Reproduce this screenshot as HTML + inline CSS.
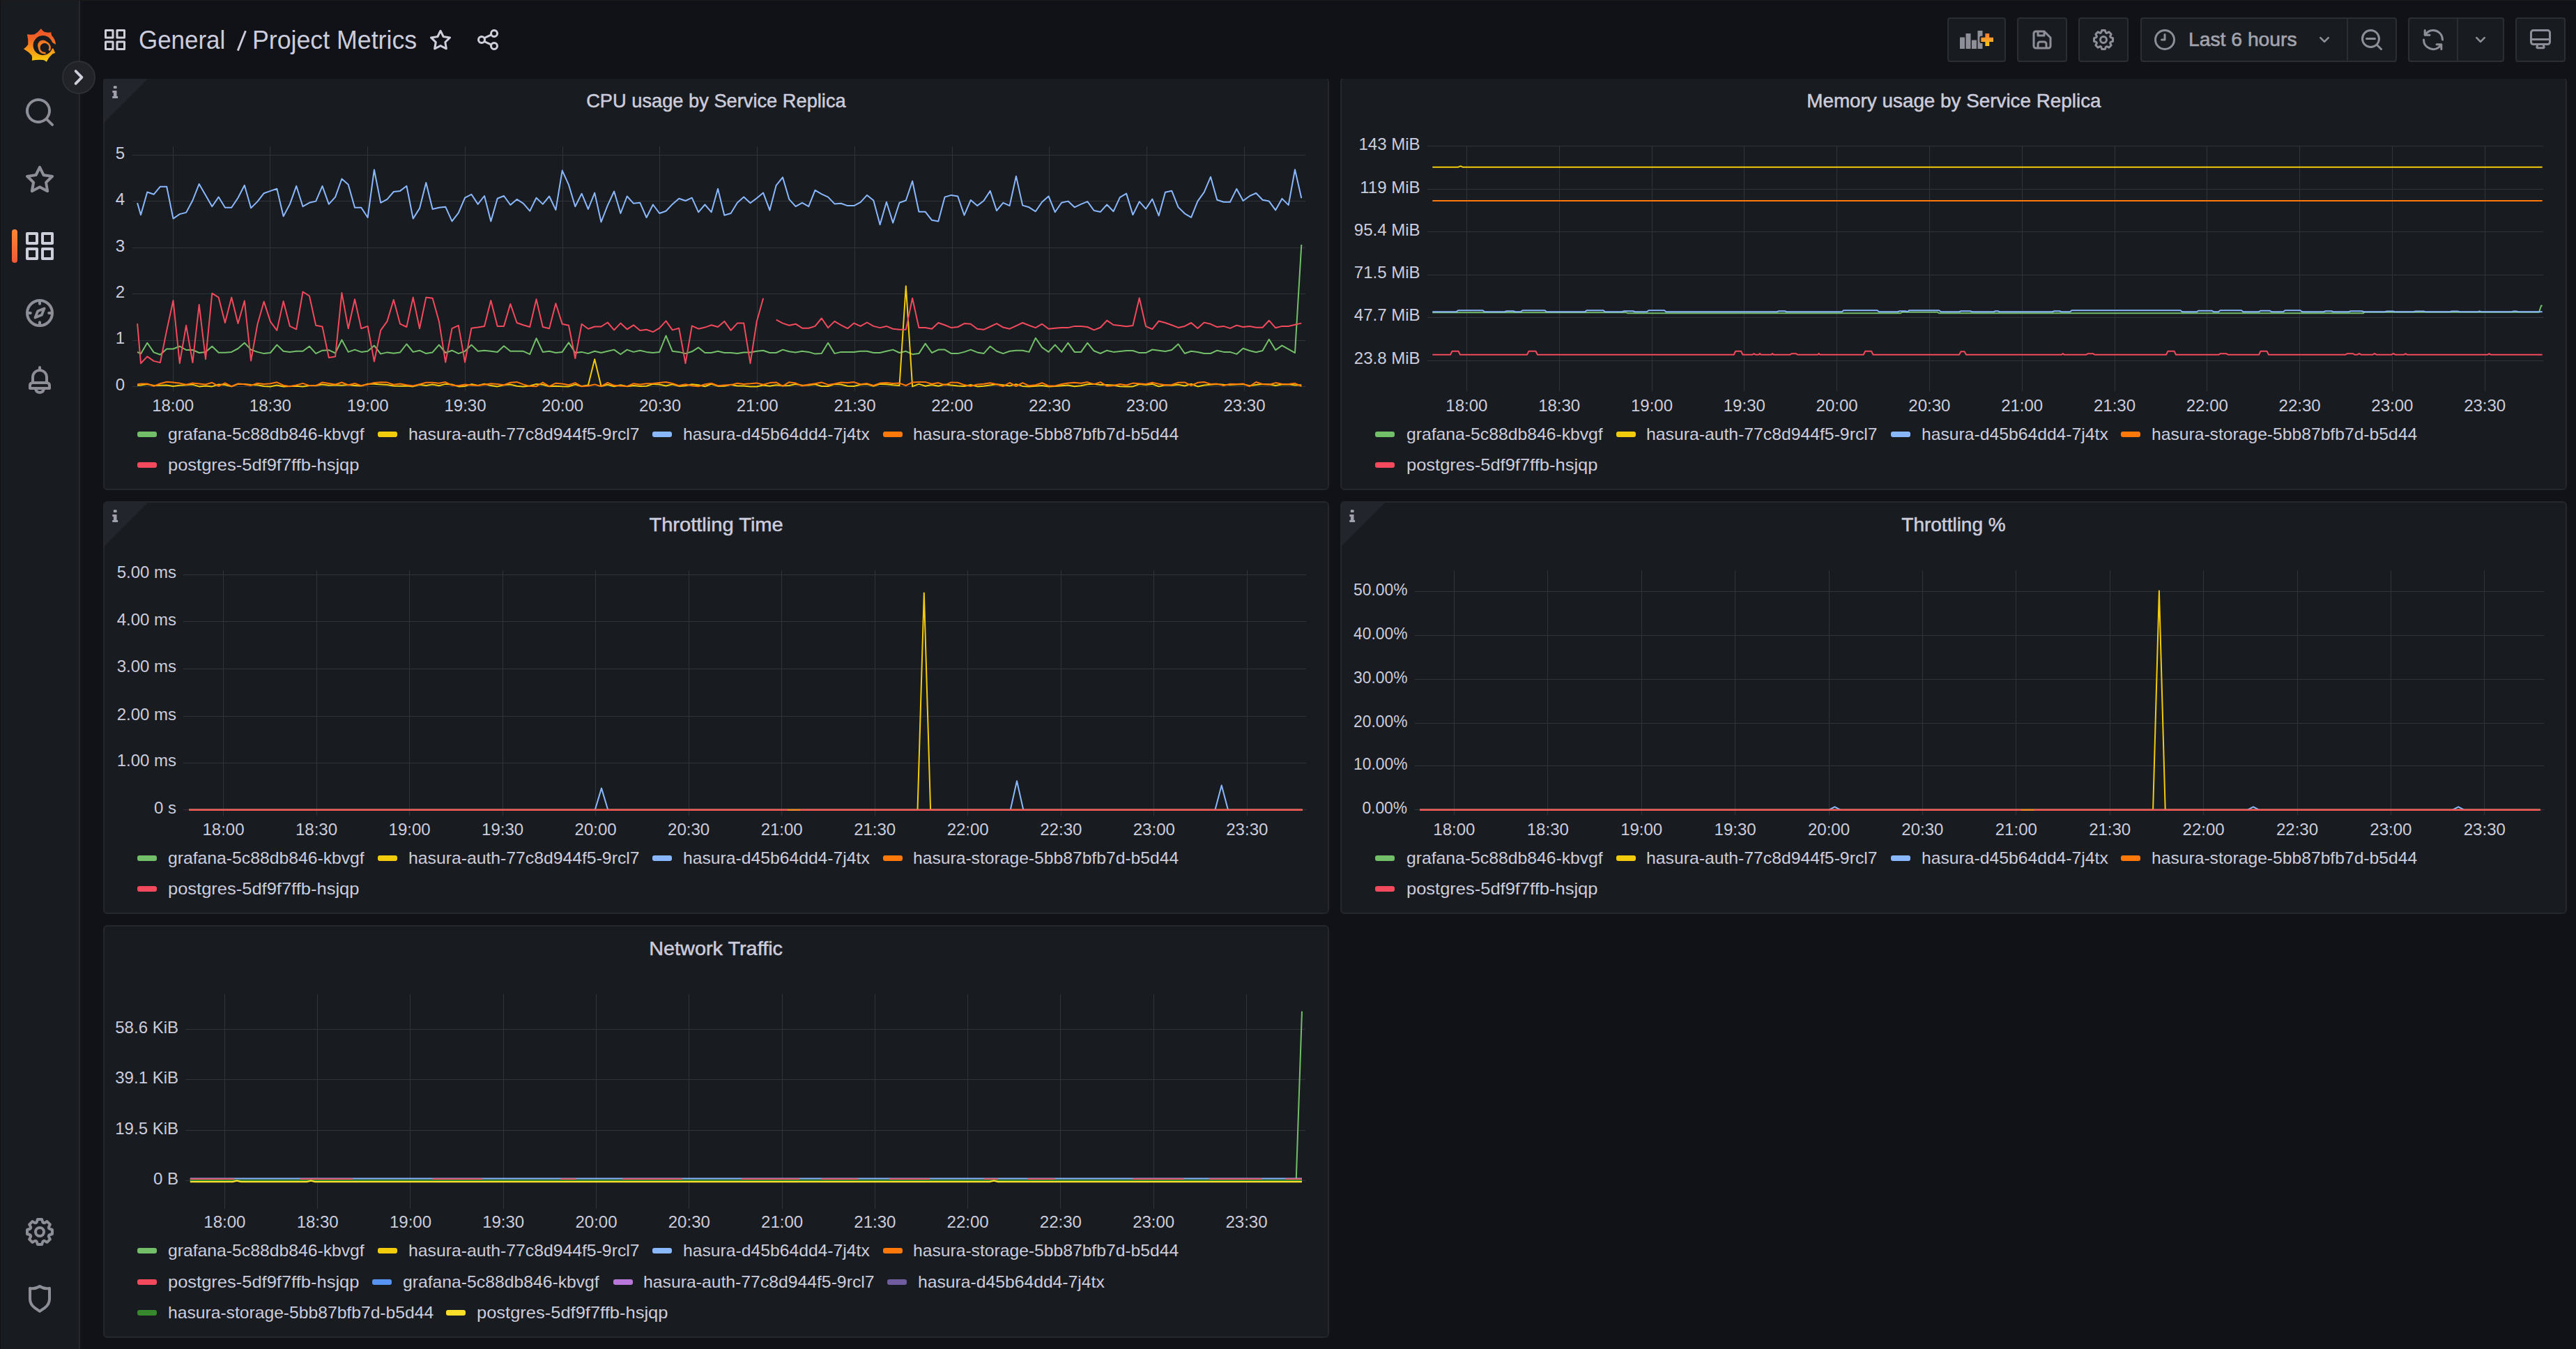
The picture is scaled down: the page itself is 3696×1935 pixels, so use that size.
<!DOCTYPE html><html><head><meta charset="utf-8"><style>html,body{margin:0;padding:0;background:#111217;width:3696px;height:1935px;overflow:hidden;position:relative;font-family:'Liberation Sans', sans-serif}</style></head><body>
<div style="position:absolute;left:147.5px;top:111px;width:1759.5px;height:592px;box-sizing:border-box;background:#181b1f;border:2px solid #24272c;border-radius:6px;overflow:hidden"><div style="position:absolute;left:-2px;top:-2px;width:0;height:0;border-style:solid;border-width:66px 66px 0 0;border-color:#22252b transparent transparent transparent"></div><svg style="position:absolute;left:-2px;top:-2px" width="40" height="40" viewBox="0 0 40 40"><g fill="#a0a1ac"><rect x="14.8" y="12.2" width="4.8" height="3.9" rx="0.8"/><path d="M13.3 19h6.2v8.1h1.6v3h-7.8v-3h1.6v-5h-1.6z"/></g></svg></div>
<div style="position:absolute;left:627.25px;width:800px;top:129.3px;text-align:center;font:28px 'Liberation Sans', sans-serif;color:#ccccdc;line-height:32px;-webkit-text-stroke:0.5px #ccccdc"><span style="display:inline-block;transform:scaleX(0.973)">CPU usage by Service Replica</span></div>
<div style="position:absolute;left:1923px;top:111px;width:1760px;height:592px;box-sizing:border-box;background:#181b1f;border:2px solid #24272c;border-radius:6px;overflow:hidden"></div>
<div style="position:absolute;left:2403.0px;width:800px;top:129.3px;text-align:center;font:28px 'Liberation Sans', sans-serif;color:#ccccdc;line-height:32px;-webkit-text-stroke:0.5px #ccccdc"><span style="display:inline-block;transform:scaleX(0.994)">Memory usage by Service Replica</span></div>
<div style="position:absolute;left:147.5px;top:719px;width:1759.5px;height:592px;box-sizing:border-box;background:#181b1f;border:2px solid #24272c;border-radius:6px;overflow:hidden"><div style="position:absolute;left:-2px;top:-2px;width:0;height:0;border-style:solid;border-width:66px 66px 0 0;border-color:#22252b transparent transparent transparent"></div><svg style="position:absolute;left:-2px;top:-2px" width="40" height="40" viewBox="0 0 40 40"><g fill="#a0a1ac"><rect x="14.8" y="12.2" width="4.8" height="3.9" rx="0.8"/><path d="M13.3 19h6.2v8.1h1.6v3h-7.8v-3h1.6v-5h-1.6z"/></g></svg></div>
<div style="position:absolute;left:627.25px;width:800px;top:737.3px;text-align:center;font:28px 'Liberation Sans', sans-serif;color:#ccccdc;line-height:32px;-webkit-text-stroke:0.5px #ccccdc"><span style="display:inline-block;transform:scaleX(1.039)">Throttling Time</span></div>
<div style="position:absolute;left:1923px;top:719px;width:1760px;height:592px;box-sizing:border-box;background:#181b1f;border:2px solid #24272c;border-radius:6px;overflow:hidden"><div style="position:absolute;left:-2px;top:-2px;width:0;height:0;border-style:solid;border-width:66px 66px 0 0;border-color:#22252b transparent transparent transparent"></div><svg style="position:absolute;left:-2px;top:-2px" width="40" height="40" viewBox="0 0 40 40"><g fill="#a0a1ac"><rect x="14.8" y="12.2" width="4.8" height="3.9" rx="0.8"/><path d="M13.3 19h6.2v8.1h1.6v3h-7.8v-3h1.6v-5h-1.6z"/></g></svg></div>
<div style="position:absolute;left:2403.0px;width:800px;top:737.3px;text-align:center;font:28px 'Liberation Sans', sans-serif;color:#ccccdc;line-height:32px;-webkit-text-stroke:0.5px #ccccdc"><span style="display:inline-block;transform:scaleX(1.0)">Throttling %</span></div>
<div style="position:absolute;left:147.5px;top:1327px;width:1759.5px;height:592px;box-sizing:border-box;background:#181b1f;border:2px solid #24272c;border-radius:6px;overflow:hidden"></div>
<div style="position:absolute;left:627.25px;width:800px;top:1345.3px;text-align:center;font:28px 'Liberation Sans', sans-serif;color:#ccccdc;line-height:32px;-webkit-text-stroke:0.5px #ccccdc"><span style="display:inline-block;transform:scaleX(1.03)">Network Traffic</span></div>
<svg style="position:absolute;left:0;top:0" width="3696" height="1935" viewBox="0 0 3696 1935"><line x1="189.5" y1="222.5" x2="1873.3" y2="222.5" stroke="#303338" stroke-width="1" shape-rendering="crispEdges"/><line x1="189.5" y1="288.5" x2="1873.3" y2="288.5" stroke="#303338" stroke-width="1" shape-rendering="crispEdges"/><line x1="189.5" y1="355.5" x2="1873.3" y2="355.5" stroke="#303338" stroke-width="1" shape-rendering="crispEdges"/><line x1="189.5" y1="421.5" x2="1873.3" y2="421.5" stroke="#303338" stroke-width="1" shape-rendering="crispEdges"/><line x1="189.5" y1="488.5" x2="1873.3" y2="488.5" stroke="#303338" stroke-width="1" shape-rendering="crispEdges"/><line x1="189.5" y1="554.5" x2="1873.3" y2="554.5" stroke="#303338" stroke-width="1" shape-rendering="crispEdges"/><line x1="248.5" y1="209.8" x2="248.5" y2="561.4" stroke="#303338" stroke-width="1" shape-rendering="crispEdges"/><line x1="387.5" y1="209.8" x2="387.5" y2="561.4" stroke="#303338" stroke-width="1" shape-rendering="crispEdges"/><line x1="527.5" y1="209.8" x2="527.5" y2="561.4" stroke="#303338" stroke-width="1" shape-rendering="crispEdges"/><line x1="667.5" y1="209.8" x2="667.5" y2="561.4" stroke="#303338" stroke-width="1" shape-rendering="crispEdges"/><line x1="807.5" y1="209.8" x2="807.5" y2="561.4" stroke="#303338" stroke-width="1" shape-rendering="crispEdges"/><line x1="946.5" y1="209.8" x2="946.5" y2="561.4" stroke="#303338" stroke-width="1" shape-rendering="crispEdges"/><line x1="1086.5" y1="209.8" x2="1086.5" y2="561.4" stroke="#303338" stroke-width="1" shape-rendering="crispEdges"/><line x1="1226.5" y1="209.8" x2="1226.5" y2="561.4" stroke="#303338" stroke-width="1" shape-rendering="crispEdges"/><line x1="1366.5" y1="209.8" x2="1366.5" y2="561.4" stroke="#303338" stroke-width="1" shape-rendering="crispEdges"/><line x1="1505.5" y1="209.8" x2="1505.5" y2="561.4" stroke="#303338" stroke-width="1" shape-rendering="crispEdges"/><line x1="1645.5" y1="209.8" x2="1645.5" y2="561.4" stroke="#303338" stroke-width="1" shape-rendering="crispEdges"/><line x1="1785.5" y1="209.8" x2="1785.5" y2="561.4" stroke="#303338" stroke-width="1" shape-rendering="crispEdges"/><polyline points="197.1,504.9 202.0,507.6 211.3,491.8 220.6,505.4 229.9,508.7 239.2,500.5 248.5,500.5 257.8,496.7 267.1,502.0 276.4,502.0 285.7,506.0 295.0,504.9 304.3,496.7 313.6,505.7 322.9,505.7 332.2,504.9 341.5,500.0 350.8,491.8 360.1,501.6 369.4,504.9 378.7,507.1 388.0,506.0 397.3,494.6 406.6,503.8 415.9,504.9 425.2,503.8 434.5,503.8 443.9,496.7 453.2,507.1 462.5,502.7 471.8,502.2 481.1,506.5 490.4,487.5 499.7,504.9 509.0,501.6 518.3,504.9 527.6,503.8 536.9,495.7 546.2,507.6 555.5,505.4 564.8,506.7 574.1,505.4 583.4,493.5 592.7,504.9 602.0,502.7 611.3,507.1 620.6,505.4 629.9,494.6 639.2,506.0 648.5,502.7 657.8,507.1 667.1,503.8 676.4,494.6 685.7,503.8 695.0,502.7 704.3,503.8 713.7,504.9 723.0,496.2 732.3,503.8 741.6,503.8 750.9,503.8 760.2,508.2 769.5,485.3 778.8,504.9 788.1,503.8 797.4,506.0 806.7,504.9 816.0,491.3 825.3,506.0 834.6,504.9 843.9,507.1 853.2,503.8 862.5,506.0 871.8,503.8 881.1,501.6 890.4,508.2 899.7,501.6 909.0,504.9 918.3,502.7 927.6,504.9 936.9,506.0 946.2,504.9 955.5,481.5 964.8,503.8 974.2,504.9 983.5,507.1 992.8,504.3 1002.1,498.4 1011.4,506.0 1020.7,506.0 1030.0,503.8 1039.3,506.0 1048.6,506.0 1057.9,507.1 1067.2,505.4 1076.5,505.4 1085.8,503.8 1095.1,502.7 1104.4,506.0 1113.7,506.0 1123.0,501.6 1132.3,504.3 1141.6,505.4 1150.9,503.8 1160.2,504.9 1169.5,507.6 1178.8,507.1 1188.1,491.8 1197.4,507.1 1206.7,504.9 1216.0,504.9 1225.3,504.9 1234.6,503.8 1244.0,503.8 1253.3,506.0 1262.6,506.0 1271.9,503.8 1281.2,501.6 1290.5,506.0 1299.8,503.8 1309.1,508.2 1318.4,507.1 1327.7,492.9 1337.0,506.0 1346.3,501.6 1355.6,501.6 1364.9,507.1 1374.2,507.1 1383.5,504.9 1392.8,501.6 1402.1,505.4 1411.4,507.1 1420.7,496.7 1430.0,503.8 1439.3,507.1 1448.6,503.8 1457.9,502.7 1467.2,502.7 1476.5,504.9 1485.8,484.8 1495.1,498.4 1504.5,504.9 1513.8,494.6 1523.1,504.9 1532.4,491.8 1541.7,504.9 1551.0,504.9 1560.3,491.8 1569.6,503.3 1578.9,507.0 1588.2,502.7 1597.5,504.9 1606.8,503.9 1616.1,503.0 1625.4,503.0 1634.7,506.1 1644.0,506.1 1653.3,501.5 1662.6,502.7 1671.9,503.9 1681.2,502.1 1690.5,493.5 1699.8,507.0 1709.1,503.7 1718.4,504.9 1727.7,507.0 1737.0,507.0 1746.3,502.7 1755.6,504.9 1764.9,504.9 1774.3,507.9 1783.6,499.7 1792.9,503.0 1802.2,505.2 1811.5,503.0 1820.8,486.8 1830.1,502.1 1839.4,495.6 1848.7,500.9 1858.0,506.1 1867.3,351.0" fill="none" stroke="#73BF69" stroke-width="2.0" stroke-linejoin="round"/><polyline points="197.1,552.7 202.0,552.5 211.3,551.0 220.6,552.9 229.9,552.7 239.2,552.4 248.5,554.0 257.8,552.7 267.1,552.2 276.4,551.6 285.7,554.4 295.0,553.5 304.3,554.4 313.6,551.5 322.9,552.0 332.2,554.4 341.5,550.8 350.8,550.9 360.1,552.1 369.4,552.3 378.7,554.1 388.0,554.4 397.3,552.6 406.6,554.4 415.9,554.0 425.2,553.8 434.5,554.4 443.9,552.9 453.2,553.0 462.5,551.4 471.8,552.7 481.1,552.2 490.4,552.7 499.7,552.1 509.0,552.9 518.3,553.6 527.6,550.8 536.9,550.8 546.2,551.4 555.5,551.9 564.8,553.5 574.1,553.8 583.4,553.6 592.7,554.4 602.0,551.7 611.3,553.1 620.6,551.4 629.9,553.2 639.2,550.9 648.5,551.4 657.8,554.4 667.1,553.9 676.4,551.1 685.7,552.9 695.0,550.8 704.3,553.1 713.7,554.4 723.0,552.2 732.3,551.6 741.6,553.7 750.9,554.4 760.2,553.4 769.5,550.9 778.8,551.7 788.1,554.3 797.4,553.8 806.7,554.3 816.0,554.4 825.3,551.6 834.6,554.0 843.9,552.5 853.2,515.2 862.5,554.0 871.8,551.8 881.1,554.2 890.4,552.2 899.7,554.3 909.0,553.1 918.3,553.9 927.6,553.7 936.9,550.9 946.2,551.5 955.5,553.5 964.8,551.2 974.2,553.9 983.5,553.2 992.8,551.3 1002.1,552.2 1011.4,554.3 1020.7,550.8 1030.0,553.9 1039.3,553.7 1048.6,551.7 1057.9,553.4 1067.2,553.6 1076.5,554.4 1085.8,554.4 1095.1,552.4 1104.4,553.8 1113.7,552.3 1123.0,553.3 1132.3,552.9 1141.6,550.9 1150.9,552.8 1160.2,552.4 1169.5,551.3 1178.8,554.0 1188.1,554.1 1197.4,551.1 1206.7,551.5 1216.0,553.7 1225.3,554.0 1234.6,551.8 1244.0,551.0 1253.3,553.9 1262.6,550.9 1271.9,551.2 1281.2,552.3 1290.5,553.1 1299.8,410.3 1309.1,554.4 1318.4,550.9 1327.7,553.8 1337.0,551.9 1346.3,553.7 1355.6,551.5 1364.9,552.4 1374.2,553.6 1383.5,554.0 1392.8,551.9 1402.1,554.4 1411.4,553.8 1420.7,552.5 1430.0,551.3 1439.3,552.3 1448.6,553.6 1457.9,551.1 1467.2,553.9 1476.5,554.4 1485.8,553.7 1495.1,553.0 1504.5,554.4 1513.8,554.0 1523.1,553.3 1532.4,552.5 1541.7,554.2 1551.0,553.3 1560.3,551.2 1569.6,550.8 1578.9,552.1 1588.2,552.0 1597.5,552.4 1606.8,554.2 1616.1,554.4 1625.4,554.4 1634.7,551.1 1644.0,551.9 1653.3,550.9 1662.6,554.4 1671.9,552.2 1681.2,552.8 1690.5,551.8 1699.8,553.5 1709.1,550.8 1718.4,554.4 1727.7,552.6 1737.0,551.8 1746.3,551.1 1755.6,551.8 1764.9,551.9 1774.3,551.6 1783.6,551.1 1792.9,553.3 1802.2,552.0 1811.5,551.1 1820.8,551.3 1830.1,553.1 1839.4,551.6 1848.7,551.3 1858.0,552.4 1867.3,552.2" fill="none" stroke="#F2CC0C" stroke-width="2.0" stroke-linejoin="round"/><polyline points="197.1,291.1 202.0,308.2 211.3,275.5 220.6,278.8 229.9,267.7 239.2,267.7 248.5,313.6 257.8,307.1 267.1,304.9 276.4,287.5 285.7,263.9 295.0,279.9 304.3,296.2 313.6,282.6 322.9,297.8 332.2,297.8 341.5,283.7 350.8,265.8 360.1,298.4 369.4,289.1 378.7,277.2 388.0,273.9 397.3,270.7 406.6,310.3 415.9,292.9 425.2,266.8 434.5,296.2 443.9,290.8 453.2,288.6 462.5,266.8 471.8,292.9 481.1,282.6 490.4,256.5 499.7,264.7 509.0,297.8 518.3,297.8 527.6,312.0 536.9,243.5 546.2,290.8 555.5,285.9 564.8,275.0 574.1,273.9 583.4,266.8 592.7,313.6 602.0,298.9 611.3,262.0 620.6,300.0 629.9,297.8 639.2,296.7 648.5,317.4 657.8,305.4 667.1,283.7 676.4,278.8 685.7,292.9 695.0,281.0 704.3,317.4 713.7,284.8 723.0,281.0 732.3,294.0 741.6,285.9 750.9,291.8 760.2,302.7 769.5,283.7 778.8,292.9 788.1,281.5 797.4,301.1 806.7,244.6 816.0,265.2 825.3,296.2 834.6,277.7 843.9,300.0 853.2,276.6 862.5,318.5 871.8,294.6 881.1,274.5 890.4,306.0 899.7,281.5 909.0,291.8 918.3,290.8 927.6,312.0 936.9,293.5 946.2,306.0 955.5,302.7 964.8,292.9 974.2,284.8 983.5,288.0 992.8,283.7 1002.1,304.3 1011.4,293.5 1020.7,304.3 1030.0,270.7 1039.3,308.7 1048.6,306.0 1057.9,290.8 1067.2,282.6 1076.5,291.3 1085.8,284.2 1095.1,276.6 1104.4,301.6 1113.7,265.8 1123.0,254.3 1132.3,285.9 1141.6,296.2 1150.9,290.8 1160.2,296.2 1169.5,272.8 1178.8,278.3 1188.1,282.6 1197.4,292.4 1206.7,291.8 1216.0,295.1 1225.3,295.1 1234.6,290.2 1244.0,279.9 1253.3,287.5 1262.6,322.3 1271.9,289.7 1281.2,319.6 1290.5,290.8 1299.8,287.5 1309.1,259.8 1318.4,303.8 1327.7,303.8 1337.0,315.8 1346.3,317.4 1355.6,282.6 1364.9,279.9 1374.2,281.5 1383.5,308.7 1392.8,287.0 1402.1,295.1 1411.4,288.0 1420.7,273.9 1430.0,302.2 1439.3,290.8 1448.6,295.1 1457.9,252.7 1467.2,294.6 1476.5,297.3 1485.8,303.3 1495.1,289.7 1504.5,281.5 1513.8,304.3 1523.1,290.8 1532.4,288.6 1541.7,297.3 1551.0,292.9 1560.3,289.1 1569.6,302.0 1578.9,303.9 1588.2,293.5 1597.5,303.3 1606.8,283.1 1616.1,277.6 1625.4,308.1 1634.7,289.2 1644.0,299.6 1653.3,285.5 1662.6,309.4 1671.9,275.7 1681.2,273.7 1690.5,297.1 1699.8,306.3 1709.1,311.8 1718.4,288.6 1727.7,275.7 1737.0,253.7 1746.3,286.8 1755.6,289.8 1764.9,289.8 1774.3,270.9 1783.6,288.0 1792.9,281.2 1802.2,277.0 1811.5,286.8 1820.8,288.6 1830.1,301.4 1839.4,284.9 1848.7,294.1 1858.0,243.3 1867.3,284.3" fill="none" stroke="#8AB8FF" stroke-width="2.0" stroke-linejoin="round"/><polyline points="197.1,551.2 202.0,550.5 211.3,550.4 220.6,553.9 229.9,550.2 239.2,547.8 248.5,548.6 257.8,549.6 267.1,551.8 276.4,549.5 285.7,550.5 295.0,551.5 304.3,548.8 313.6,553.8 322.9,549.4 332.2,554.2 341.5,550.4 350.8,551.2 360.1,552.9 369.4,549.8 378.7,551.1 388.0,550.3 397.3,548.3 406.6,552.7 415.9,554.3 425.2,552.4 434.5,549.9 443.9,553.1 453.2,553.3 462.5,548.4 471.8,550.0 481.1,551.5 490.4,548.5 499.7,552.2 509.0,550.0 518.3,553.1 527.6,551.5 536.9,549.0 546.2,548.3 555.5,548.6 564.8,551.8 574.1,550.5 583.4,552.3 592.7,553.5 602.0,551.1 611.3,548.8 620.6,548.8 629.9,549.7 639.2,548.1 648.5,552.6 657.8,553.3 667.1,551.4 676.4,552.6 685.7,553.0 695.0,551.7 704.3,550.2 713.7,551.1 723.0,552.3 732.3,548.8 741.6,547.9 750.9,551.4 760.2,553.9 769.5,554.2 778.8,548.6 788.1,554.1 797.4,549.7 806.7,550.6 816.0,552.3 825.3,549.1 834.6,554.3 843.9,553.5 853.2,551.4 862.5,554.2 871.8,548.9 881.1,552.8 890.4,553.5 899.7,554.1 909.0,550.2 918.3,551.4 927.6,550.2 936.9,550.1 946.2,549.0 955.5,548.0 964.8,549.9 974.2,553.1 983.5,551.2 992.8,553.2 1002.1,554.3 1011.4,551.3 1020.7,549.7 1030.0,553.2 1039.3,552.6 1048.6,552.1 1057.9,549.8 1067.2,550.9 1076.5,550.3 1085.8,549.4 1095.1,551.8 1104.4,549.1 1113.7,548.4 1123.0,553.8 1132.3,548.2 1141.6,549.6 1150.9,553.5 1160.2,551.4 1169.5,550.2 1178.8,548.4 1188.1,551.9 1197.4,550.6 1206.7,548.6 1216.0,549.1 1225.3,548.1 1234.6,551.3 1244.0,550.1 1253.3,553.0 1262.6,549.6 1271.9,549.0 1281.2,550.1 1290.5,549.6 1299.8,553.0 1309.1,548.4 1318.4,547.9 1327.7,547.9 1337.0,550.8 1346.3,549.1 1355.6,552.3 1364.9,548.4 1374.2,548.7 1383.5,552.1 1392.8,553.9 1402.1,551.5 1411.4,550.7 1420.7,549.3 1430.0,551.2 1439.3,554.2 1448.6,549.0 1457.9,554.0 1467.2,549.1 1476.5,553.3 1485.8,552.2 1495.1,549.2 1504.5,553.5 1513.8,553.4 1523.1,551.0 1532.4,549.6 1541.7,548.8 1551.0,549.8 1560.3,548.1 1569.6,551.1 1578.9,548.1 1588.2,553.8 1597.5,552.9 1606.8,550.9 1616.1,552.5 1625.4,549.6 1634.7,550.2 1644.0,550.9 1653.3,548.8 1662.6,550.7 1671.9,552.3 1681.2,551.9 1690.5,548.8 1699.8,548.4 1709.1,553.0 1718.4,548.8 1727.7,548.0 1737.0,550.9 1746.3,550.6 1755.6,553.1 1764.9,550.8 1774.3,551.1 1783.6,550.4 1792.9,554.2 1802.2,548.0 1811.5,551.0 1820.8,551.7 1830.1,549.1 1839.4,550.7 1848.7,551.1 1858.0,549.8 1867.3,554.0" fill="none" stroke="#FF780A" stroke-width="2.0" stroke-linejoin="round"/><polyline points="197.1,464.2 202.0,521.2 211.3,511.4 220.6,517.9 229.9,520.1 239.2,473.9 248.5,431.0 257.8,521.2 267.1,466.8 276.4,520.1 285.7,437.0 295.0,515.2 304.3,420.7 313.6,426.6 322.9,463.0 332.2,426.6 341.5,464.1 350.8,431.5 360.1,517.4 369.4,465.2 378.7,432.6 388.0,461.4 397.3,473.9 406.6,432.1 415.9,467.9 425.2,472.3 434.5,418.5 443.9,424.5 453.2,466.8 462.5,468.5 471.8,513.0 481.1,511.4 490.4,420.1 499.7,471.2 509.0,429.3 518.3,471.2 527.6,467.9 536.9,518.5 546.2,473.9 555.5,460.9 564.8,429.9 574.1,464.7 583.4,469.0 592.7,426.6 602.0,471.2 611.3,426.6 620.6,427.7 629.9,460.9 639.2,519.6 648.5,471.2 657.8,466.8 667.1,519.6 676.4,470.7 685.7,469.6 695.0,467.9 704.3,431.0 713.7,467.9 723.0,467.9 732.3,435.9 741.6,463.0 750.9,466.3 760.2,469.0 769.5,429.3 778.8,469.0 788.1,471.2 797.4,435.3 806.7,464.7 816.0,466.8 825.3,514.1 834.6,464.7 843.9,471.7 853.2,468.5 862.5,468.5 871.8,462.5 881.1,473.4 890.4,463.6 899.7,472.3 909.0,466.3 918.3,473.9 927.6,472.8 936.9,476.1 946.2,470.7 955.5,460.3 964.8,473.4 974.2,470.7 983.5,521.2 992.8,467.4 1002.1,471.7 1011.4,469.6 1020.7,466.3 1030.0,469.0 1039.3,460.9 1048.6,473.9 1057.9,463.6 1067.2,463.6 1076.5,521.2 1085.8,460.9 1095.1,427.7" fill="none" stroke="#F2495C" stroke-width="2.0" stroke-linejoin="round"/><polyline points="1113.7,458.7 1123.0,463.6 1132.3,466.8 1141.6,464.7 1150.9,470.7 1160.2,470.7 1169.5,467.9 1178.8,456.5 1188.1,470.1 1197.4,460.9 1206.7,466.3 1216.0,471.2 1225.3,463.6 1234.6,467.9 1244.0,462.5 1253.3,467.9 1262.6,470.1 1271.9,467.9 1281.2,471.7 1290.5,472.8 1299.8,472.8 1309.1,427.7 1318.4,470.1 1327.7,470.1 1337.0,471.7 1346.3,463.0 1355.6,466.3 1364.9,470.1 1374.2,469.0 1383.5,464.1 1392.8,464.7 1402.1,471.7 1411.4,472.8 1420.7,468.5 1430.0,464.1 1439.3,469.6 1448.6,471.7 1457.9,467.4 1467.2,463.0 1476.5,466.8 1485.8,470.1 1495.1,464.7 1504.5,471.7 1513.8,470.7 1523.1,470.1 1532.4,470.1 1541.7,467.9 1551.0,467.9 1560.3,469.0 1569.6,473.4 1578.9,469.7 1588.2,459.7 1597.5,466.0 1606.8,467.0 1616.1,468.2 1625.4,467.0 1634.7,427.5 1644.0,468.2 1653.3,472.1 1662.6,460.5 1671.9,463.0 1681.2,466.3 1690.5,469.9 1699.8,467.9 1709.1,463.0 1718.4,470.9 1727.7,462.6 1737.0,464.8 1746.3,469.1 1755.6,467.9 1764.9,470.9 1774.3,466.6 1783.6,469.1 1792.9,467.9 1802.2,469.7 1811.5,469.7 1820.8,459.7 1830.1,470.3 1839.4,467.9 1848.7,467.9 1858.0,465.8 1867.3,463.6" fill="none" stroke="#F2495C" stroke-width="2.0" stroke-linejoin="round"/></svg>
<div style="position:absolute;left:-121px;width:300px;top:205.70000000000002px;text-align:right;font:24px 'Liberation Sans', sans-serif;color:#ccccdc;line-height:28px;white-space:nowrap"><span style="display:inline-block;transform:scaleX(1.0);transform-origin:right">5</span></div>
<div style="position:absolute;left:-121px;width:300px;top:272.1px;text-align:right;font:24px 'Liberation Sans', sans-serif;color:#ccccdc;line-height:28px;white-space:nowrap"><span style="display:inline-block;transform:scaleX(1.0);transform-origin:right">4</span></div>
<div style="position:absolute;left:-121px;width:300px;top:338.5px;text-align:right;font:24px 'Liberation Sans', sans-serif;color:#ccccdc;line-height:28px;white-space:nowrap"><span style="display:inline-block;transform:scaleX(1.0);transform-origin:right">3</span></div>
<div style="position:absolute;left:-121px;width:300px;top:404.90000000000003px;text-align:right;font:24px 'Liberation Sans', sans-serif;color:#ccccdc;line-height:28px;white-space:nowrap"><span style="display:inline-block;transform:scaleX(1.0);transform-origin:right">2</span></div>
<div style="position:absolute;left:-121px;width:300px;top:471.3px;text-align:right;font:24px 'Liberation Sans', sans-serif;color:#ccccdc;line-height:28px;white-space:nowrap"><span style="display:inline-block;transform:scaleX(1.0);transform-origin:right">1</span></div>
<div style="position:absolute;left:-121px;width:300px;top:537.6999999999999px;text-align:right;font:24px 'Liberation Sans', sans-serif;color:#ccccdc;line-height:28px;white-space:nowrap"><span style="display:inline-block;transform:scaleX(1.0);transform-origin:right">0</span></div>
<div style="position:absolute;left:188.2px;width:120px;top:568px;text-align:center;font:24px 'Liberation Sans', sans-serif;color:#ccccdc;line-height:28px">18:00</div>
<div style="position:absolute;left:327.9px;width:120px;top:568px;text-align:center;font:24px 'Liberation Sans', sans-serif;color:#ccccdc;line-height:28px">18:30</div>
<div style="position:absolute;left:467.7px;width:120px;top:568px;text-align:center;font:24px 'Liberation Sans', sans-serif;color:#ccccdc;line-height:28px">19:00</div>
<div style="position:absolute;left:607.5px;width:120px;top:568px;text-align:center;font:24px 'Liberation Sans', sans-serif;color:#ccccdc;line-height:28px">19:30</div>
<div style="position:absolute;left:747.2px;width:120px;top:568px;text-align:center;font:24px 'Liberation Sans', sans-serif;color:#ccccdc;line-height:28px">20:00</div>
<div style="position:absolute;left:887.0px;width:120px;top:568px;text-align:center;font:24px 'Liberation Sans', sans-serif;color:#ccccdc;line-height:28px">20:30</div>
<div style="position:absolute;left:1026.7px;width:120px;top:568px;text-align:center;font:24px 'Liberation Sans', sans-serif;color:#ccccdc;line-height:28px">21:00</div>
<div style="position:absolute;left:1166.5px;width:120px;top:568px;text-align:center;font:24px 'Liberation Sans', sans-serif;color:#ccccdc;line-height:28px">21:30</div>
<div style="position:absolute;left:1306.2px;width:120px;top:568px;text-align:center;font:24px 'Liberation Sans', sans-serif;color:#ccccdc;line-height:28px">22:00</div>
<div style="position:absolute;left:1446.0px;width:120px;top:568px;text-align:center;font:24px 'Liberation Sans', sans-serif;color:#ccccdc;line-height:28px">22:30</div>
<div style="position:absolute;left:1585.7px;width:120px;top:568px;text-align:center;font:24px 'Liberation Sans', sans-serif;color:#ccccdc;line-height:28px">23:00</div>
<div style="position:absolute;left:1725.5px;width:120px;top:568px;text-align:center;font:24px 'Liberation Sans', sans-serif;color:#ccccdc;line-height:28px">23:30</div>
<div style="position:absolute;left:196.8px;top:619px;width:28px;height:8px;border-radius:3px;background:#73BF69"></div>
<div style="position:absolute;left:241px;top:609px;font:24px 'Liberation Sans', sans-serif;color:#ccccdc;line-height:28px;white-space:nowrap"><span style="display:inline-block;transform:scaleX(1.03);transform-origin:left">grafana-5c88db846-kbvgf</span></div>
<div style="position:absolute;left:542px;top:619px;width:28px;height:8px;border-radius:3px;background:#F2CC0C"></div>
<div style="position:absolute;left:585.8px;top:609px;font:24px 'Liberation Sans', sans-serif;color:#ccccdc;line-height:28px;white-space:nowrap"><span style="display:inline-block;transform:scaleX(1.031);transform-origin:left">hasura-auth-77c8d944f5-9rcl7</span></div>
<div style="position:absolute;left:936px;top:619px;width:28px;height:8px;border-radius:3px;background:#8AB8FF"></div>
<div style="position:absolute;left:980px;top:609px;font:24px 'Liberation Sans', sans-serif;color:#ccccdc;line-height:28px;white-space:nowrap"><span style="display:inline-block;transform:scaleX(1.029);transform-origin:left">hasura-d45b64dd4-7j4tx</span></div>
<div style="position:absolute;left:1266.7px;top:619px;width:28px;height:8px;border-radius:3px;background:#FF780A"></div>
<div style="position:absolute;left:1310.4px;top:609px;font:24px 'Liberation Sans', sans-serif;color:#ccccdc;line-height:28px;white-space:nowrap"><span style="display:inline-block;transform:scaleX(1.0275);transform-origin:left">hasura-storage-5bb87bfb7d-b5d44</span></div>
<div style="position:absolute;left:196.8px;top:663px;width:28px;height:8px;border-radius:3px;background:#F2495C"></div>
<div style="position:absolute;left:241px;top:653px;font:24px 'Liberation Sans', sans-serif;color:#ccccdc;line-height:28px;white-space:nowrap"><span style="display:inline-block;transform:scaleX(1.062);transform-origin:left">postgres-5df9f7ffb-hsjqp</span></div>
<svg style="position:absolute;left:0;top:0" width="3696" height="1935" viewBox="0 0 3696 1935"><line x1="2047.5" y1="209.5" x2="3649.2" y2="209.5" stroke="#303338" stroke-width="1" shape-rendering="crispEdges"/><line x1="2047.5" y1="271.5" x2="3649.2" y2="271.5" stroke="#303338" stroke-width="1" shape-rendering="crispEdges"/><line x1="2047.5" y1="332.5" x2="3649.2" y2="332.5" stroke="#303338" stroke-width="1" shape-rendering="crispEdges"/><line x1="2047.5" y1="394.5" x2="3649.2" y2="394.5" stroke="#303338" stroke-width="1" shape-rendering="crispEdges"/><line x1="2047.5" y1="455.5" x2="3649.2" y2="455.5" stroke="#303338" stroke-width="1" shape-rendering="crispEdges"/><line x1="2047.5" y1="517.5" x2="3649.2" y2="517.5" stroke="#303338" stroke-width="1" shape-rendering="crispEdges"/><line x1="2104.5" y1="209.6" x2="2104.5" y2="561.3" stroke="#303338" stroke-width="1" shape-rendering="crispEdges"/><line x1="2237.5" y1="209.6" x2="2237.5" y2="561.3" stroke="#303338" stroke-width="1" shape-rendering="crispEdges"/><line x1="2370.5" y1="209.6" x2="2370.5" y2="561.3" stroke="#303338" stroke-width="1" shape-rendering="crispEdges"/><line x1="2502.5" y1="209.6" x2="2502.5" y2="561.3" stroke="#303338" stroke-width="1" shape-rendering="crispEdges"/><line x1="2635.5" y1="209.6" x2="2635.5" y2="561.3" stroke="#303338" stroke-width="1" shape-rendering="crispEdges"/><line x1="2768.5" y1="209.6" x2="2768.5" y2="561.3" stroke="#303338" stroke-width="1" shape-rendering="crispEdges"/><line x1="2901.5" y1="209.6" x2="2901.5" y2="561.3" stroke="#303338" stroke-width="1" shape-rendering="crispEdges"/><line x1="3034.5" y1="209.6" x2="3034.5" y2="561.3" stroke="#303338" stroke-width="1" shape-rendering="crispEdges"/><line x1="3166.5" y1="209.6" x2="3166.5" y2="561.3" stroke="#303338" stroke-width="1" shape-rendering="crispEdges"/><line x1="3299.5" y1="209.6" x2="3299.5" y2="561.3" stroke="#303338" stroke-width="1" shape-rendering="crispEdges"/><line x1="3432.5" y1="209.6" x2="3432.5" y2="561.3" stroke="#303338" stroke-width="1" shape-rendering="crispEdges"/><line x1="3565.5" y1="209.6" x2="3565.5" y2="561.3" stroke="#303338" stroke-width="1" shape-rendering="crispEdges"/><polyline points="2055.3,448.2 2333.0,448.2 2335.0,449.2 2727.0,449.2 2729.0,447.8 2780.0,447.8 2782.0,449.2 3391.0,449.2 3393.0,447.8 3643.0,447.8 3646.0,438.5 3647.7,438.5" fill="none" stroke="#73BF69" stroke-width="2.0" stroke-linejoin="round"/><polyline points="2055.3,239.8 2092.0,239.8 2094.5,238.6 2096.5,238.6 2099.0,239.8 3647.7,239.8" fill="none" stroke="#F2CC0C" stroke-width="2.0" stroke-linejoin="round"/><polyline points="2055.3,447.2 2089.5,447.2 2092.0,445.2 2127.5,445.2 2130.0,447.2 2159.0,447.2 2161.5,446.2 2171.5,446.2 2174.0,447.2 2182.0,447.2 2184.5,445.2 2216.5,445.2 2219.0,447.2 2274.0,447.2 2276.5,445.2 2300.5,445.2 2303.0,447.2 2327.6,447.2 2330.1,446.2 2343.2,446.2 2345.7,447.2 2363.0,447.2 2365.5,445.2 2388.0,445.2 2390.5,447.2 2549.6,447.2 2552.1,446.2 2561.0,446.2 2563.5,447.2 2642.7,447.2 2645.2,445.2 2693.5,445.2 2696.0,447.2 2722.8,447.2 2725.3,446.2 2734.1,446.2 2736.6,447.2 2736.6,447.2 2739.1,445.2 2782.2,445.2 2784.7,447.2 2811.0,447.2 2813.5,446.2 2827.0,446.2 2829.5,447.2 2860.5,447.2 2863.0,446.2 2866.5,446.2 2869.0,447.2 2944.8,447.2 2947.3,446.2 2955.1,446.2 2957.6,447.2 2970.0,447.2 2972.5,445.2 3128.5,445.2 3131.0,447.2 3152.0,447.2 3154.5,445.7 3173.5,445.7 3176.0,447.2 3183.0,447.2 3185.5,445.2 3216.0,445.2 3218.5,447.2 3241.0,447.2 3243.5,445.7 3256.5,445.7 3259.0,447.2 3276.0,447.2 3278.5,445.2 3300.5,445.2 3303.0,447.2 3334.0,447.2 3336.5,446.2 3345.2,446.2 3347.7,447.2 3370.0,447.2 3372.5,446.2 3388.9,446.2 3391.4,447.2 3422.0,447.2 3424.5,446.4 3433.5,446.4 3436.0,447.2 3463.0,447.2 3465.5,446.4 3477.5,446.4 3480.0,447.2 3515.0,447.2 3517.5,446.4 3526.5,446.4 3529.0,447.2 3555.0,447.2 3557.5,446.4 3557.5,446.4 3560.0,447.2 3604.0,447.2 3606.5,446.4 3610.5,446.4 3613.0,447.2 3647.7,447.2" fill="none" stroke="#8AB8FF" stroke-width="2.0" stroke-linejoin="round"/><polyline points="2055.3,288.0 3647.7,288.0" fill="none" stroke="#FF780A" stroke-width="2.0" stroke-linejoin="round"/><polyline points="2055.3,508.8 2081.0,508.8 2083.5,503.8 2092.5,503.8 2095.0,508.8 2191.0,508.8 2193.5,503.8 2203.5,503.8 2206.0,508.8 2487.7,508.8 2490.2,503.8 2498.0,503.8 2500.5,508.8 2514.0,508.8 2516.5,507.3 2516.5,507.3 2519.0,508.8 2523.0,508.8 2525.5,507.3 2524.5,507.3 2527.0,508.8 2541.0,508.8 2543.5,507.3 2542.5,507.3 2545.0,508.8 2568.0,508.8 2570.5,507.3 2577.0,507.3 2579.5,508.8 2607.5,508.8 2610.0,507.3 2609.2,507.3 2611.7,508.8 2673.7,508.8 2676.2,503.8 2685.0,503.8 2687.5,508.8 2811.0,508.8 2813.5,504.3 2818.5,504.3 2821.0,508.8 2957.6,508.8 2960.1,507.3 2959.5,507.3 2962.0,508.8 2993.0,508.8 2995.5,507.3 3003.2,507.3 3005.7,508.8 3108.0,508.8 3110.5,503.8 3119.5,503.8 3122.0,508.8 3183.0,508.8 3185.5,507.3 3194.5,507.3 3197.0,508.8 3241.0,508.8 3243.5,503.8 3252.5,503.8 3255.0,508.8 3365.0,508.8 3367.5,507.3 3376.1,507.3 3378.6,508.8 3382.0,508.8 3384.5,507.3 3385.5,507.3 3388.0,508.8 3404.0,508.8 3406.5,507.3 3407.5,507.3 3410.0,508.8 3431.0,508.8 3433.5,507.3 3434.5,507.3 3437.0,508.8 3449.0,508.8 3451.5,507.3 3451.5,507.3 3454.0,508.8 3569.0,508.8 3571.5,507.3 3571.5,507.3 3574.0,508.8 3647.7,508.8" fill="none" stroke="#F2495C" stroke-width="2.0" stroke-linejoin="round"/></svg>
<div style="position:absolute;left:1737.5px;width:300px;top:192.9px;text-align:right;font:24px 'Liberation Sans', sans-serif;color:#ccccdc;line-height:28px;white-space:nowrap"><span style="display:inline-block;transform:scaleX(1.0);transform-origin:right">143 MiB</span></div>
<div style="position:absolute;left:1737.5px;width:300px;top:254.5px;text-align:right;font:24px 'Liberation Sans', sans-serif;color:#ccccdc;line-height:28px;white-space:nowrap"><span style="display:inline-block;transform:scaleX(1.0);transform-origin:right">119 MiB</span></div>
<div style="position:absolute;left:1737.5px;width:300px;top:315.5px;text-align:right;font:24px 'Liberation Sans', sans-serif;color:#ccccdc;line-height:28px;white-space:nowrap"><span style="display:inline-block;transform:scaleX(1.0);transform-origin:right">95.4 MiB</span></div>
<div style="position:absolute;left:1737.5px;width:300px;top:377.40000000000003px;text-align:right;font:24px 'Liberation Sans', sans-serif;color:#ccccdc;line-height:28px;white-space:nowrap"><span style="display:inline-block;transform:scaleX(1.0);transform-origin:right">71.5 MiB</span></div>
<div style="position:absolute;left:1737.5px;width:300px;top:438.40000000000003px;text-align:right;font:24px 'Liberation Sans', sans-serif;color:#ccccdc;line-height:28px;white-space:nowrap"><span style="display:inline-block;transform:scaleX(1.0);transform-origin:right">47.7 MiB</span></div>
<div style="position:absolute;left:1737.5px;width:300px;top:500.40000000000003px;text-align:right;font:24px 'Liberation Sans', sans-serif;color:#ccccdc;line-height:28px;white-space:nowrap"><span style="display:inline-block;transform:scaleX(1.0);transform-origin:right">23.8 MiB</span></div>
<div style="position:absolute;left:2044.4px;width:120px;top:568px;text-align:center;font:24px 'Liberation Sans', sans-serif;color:#ccccdc;line-height:28px">18:00</div>
<div style="position:absolute;left:2177.2px;width:120px;top:568px;text-align:center;font:24px 'Liberation Sans', sans-serif;color:#ccccdc;line-height:28px">18:30</div>
<div style="position:absolute;left:2310.0px;width:120px;top:568px;text-align:center;font:24px 'Liberation Sans', sans-serif;color:#ccccdc;line-height:28px">19:00</div>
<div style="position:absolute;left:2442.8px;width:120px;top:568px;text-align:center;font:24px 'Liberation Sans', sans-serif;color:#ccccdc;line-height:28px">19:30</div>
<div style="position:absolute;left:2575.6px;width:120px;top:568px;text-align:center;font:24px 'Liberation Sans', sans-serif;color:#ccccdc;line-height:28px">20:00</div>
<div style="position:absolute;left:2708.4px;width:120px;top:568px;text-align:center;font:24px 'Liberation Sans', sans-serif;color:#ccccdc;line-height:28px">20:30</div>
<div style="position:absolute;left:2841.2px;width:120px;top:568px;text-align:center;font:24px 'Liberation Sans', sans-serif;color:#ccccdc;line-height:28px">21:00</div>
<div style="position:absolute;left:2974.0px;width:120px;top:568px;text-align:center;font:24px 'Liberation Sans', sans-serif;color:#ccccdc;line-height:28px">21:30</div>
<div style="position:absolute;left:3106.8px;width:120px;top:568px;text-align:center;font:24px 'Liberation Sans', sans-serif;color:#ccccdc;line-height:28px">22:00</div>
<div style="position:absolute;left:3239.6px;width:120px;top:568px;text-align:center;font:24px 'Liberation Sans', sans-serif;color:#ccccdc;line-height:28px">22:30</div>
<div style="position:absolute;left:3372.4px;width:120px;top:568px;text-align:center;font:24px 'Liberation Sans', sans-serif;color:#ccccdc;line-height:28px">23:00</div>
<div style="position:absolute;left:3505.2px;width:120px;top:568px;text-align:center;font:24px 'Liberation Sans', sans-serif;color:#ccccdc;line-height:28px">23:30</div>
<div style="position:absolute;left:1973.3px;top:619px;width:28px;height:8px;border-radius:3px;background:#73BF69"></div>
<div style="position:absolute;left:2017.5px;top:609px;font:24px 'Liberation Sans', sans-serif;color:#ccccdc;line-height:28px;white-space:nowrap"><span style="display:inline-block;transform:scaleX(1.03);transform-origin:left">grafana-5c88db846-kbvgf</span></div>
<div style="position:absolute;left:2318.5px;top:619px;width:28px;height:8px;border-radius:3px;background:#F2CC0C"></div>
<div style="position:absolute;left:2362.3px;top:609px;font:24px 'Liberation Sans', sans-serif;color:#ccccdc;line-height:28px;white-space:nowrap"><span style="display:inline-block;transform:scaleX(1.031);transform-origin:left">hasura-auth-77c8d944f5-9rcl7</span></div>
<div style="position:absolute;left:2712.5px;top:619px;width:28px;height:8px;border-radius:3px;background:#8AB8FF"></div>
<div style="position:absolute;left:2756.5px;top:609px;font:24px 'Liberation Sans', sans-serif;color:#ccccdc;line-height:28px;white-space:nowrap"><span style="display:inline-block;transform:scaleX(1.029);transform-origin:left">hasura-d45b64dd4-7j4tx</span></div>
<div style="position:absolute;left:3043.2px;top:619px;width:28px;height:8px;border-radius:3px;background:#FF780A"></div>
<div style="position:absolute;left:3086.9px;top:609px;font:24px 'Liberation Sans', sans-serif;color:#ccccdc;line-height:28px;white-space:nowrap"><span style="display:inline-block;transform:scaleX(1.0275);transform-origin:left">hasura-storage-5bb87bfb7d-b5d44</span></div>
<div style="position:absolute;left:1973.3px;top:663px;width:28px;height:8px;border-radius:3px;background:#F2495C"></div>
<div style="position:absolute;left:2017.5px;top:653px;font:24px 'Liberation Sans', sans-serif;color:#ccccdc;line-height:28px;white-space:nowrap"><span style="display:inline-block;transform:scaleX(1.062);transform-origin:left">postgres-5df9f7ffb-hsjqp</span></div>
<svg style="position:absolute;left:0;top:0" width="3696" height="1935" viewBox="0 0 3696 1935"><line x1="263.4" y1="824.5" x2="1873.5" y2="824.5" stroke="#303338" stroke-width="1" shape-rendering="crispEdges"/><line x1="263.4" y1="891.5" x2="1873.5" y2="891.5" stroke="#303338" stroke-width="1" shape-rendering="crispEdges"/><line x1="263.4" y1="959.5" x2="1873.5" y2="959.5" stroke="#303338" stroke-width="1" shape-rendering="crispEdges"/><line x1="263.4" y1="1027.5" x2="1873.5" y2="1027.5" stroke="#303338" stroke-width="1" shape-rendering="crispEdges"/><line x1="263.4" y1="1094.5" x2="1873.5" y2="1094.5" stroke="#303338" stroke-width="1" shape-rendering="crispEdges"/><line x1="263.4" y1="1161.5" x2="1873.5" y2="1161.5" stroke="#303338" stroke-width="1" shape-rendering="crispEdges"/><line x1="320.5" y1="817.5" x2="320.5" y2="1169.7" stroke="#303338" stroke-width="1" shape-rendering="crispEdges"/><line x1="454.5" y1="817.5" x2="454.5" y2="1169.7" stroke="#303338" stroke-width="1" shape-rendering="crispEdges"/><line x1="587.5" y1="817.5" x2="587.5" y2="1169.7" stroke="#303338" stroke-width="1" shape-rendering="crispEdges"/><line x1="721.5" y1="817.5" x2="721.5" y2="1169.7" stroke="#303338" stroke-width="1" shape-rendering="crispEdges"/><line x1="854.5" y1="817.5" x2="854.5" y2="1169.7" stroke="#303338" stroke-width="1" shape-rendering="crispEdges"/><line x1="988.5" y1="817.5" x2="988.5" y2="1169.7" stroke="#303338" stroke-width="1" shape-rendering="crispEdges"/><line x1="1121.5" y1="817.5" x2="1121.5" y2="1169.7" stroke="#303338" stroke-width="1" shape-rendering="crispEdges"/><line x1="1255.5" y1="817.5" x2="1255.5" y2="1169.7" stroke="#303338" stroke-width="1" shape-rendering="crispEdges"/><line x1="1388.5" y1="817.5" x2="1388.5" y2="1169.7" stroke="#303338" stroke-width="1" shape-rendering="crispEdges"/><line x1="1522.5" y1="817.5" x2="1522.5" y2="1169.7" stroke="#303338" stroke-width="1" shape-rendering="crispEdges"/><line x1="1655.5" y1="817.5" x2="1655.5" y2="1169.7" stroke="#303338" stroke-width="1" shape-rendering="crispEdges"/><line x1="1789.5" y1="817.5" x2="1789.5" y2="1169.7" stroke="#303338" stroke-width="1" shape-rendering="crispEdges"/><polyline points="271.0,1161.7 1868.6,1161.7" fill="none" stroke="#73BF69" stroke-width="2.0" stroke-linejoin="round"/><polyline points="271.0,1161.7 1316.5,1161.7 1325.8,850.4 1335.1,1161.7 1868.6,1161.7" fill="none" stroke="#F2CC0C" stroke-width="2.0" stroke-linejoin="round"/><polyline points="271.0,1161.7 853.7,1161.7 863.0,1130.6 872.3,1161.7 1449.7,1161.7 1459.0,1120.3 1468.3,1161.7 1743.4,1161.7 1752.7,1126.5 1762.0,1161.7 1868.6,1161.7" fill="none" stroke="#8AB8FF" stroke-width="2.0" stroke-linejoin="round"/><polyline points="271.0,1161.7 1868.6,1161.7" fill="none" stroke="#FF780A" stroke-width="2.0" stroke-linejoin="round"/><polyline points="271.0,1161.7 1130.0,1161.7" fill="none" stroke="#F2495C" stroke-width="2.0" stroke-linejoin="round"/><polyline points="1148.0,1161.7 1868.6,1161.7" fill="none" stroke="#F2495C" stroke-width="2.0" stroke-linejoin="round"/></svg>
<div style="position:absolute;left:-47px;width:300px;top:807.3px;text-align:right;font:24px 'Liberation Sans', sans-serif;color:#ccccdc;line-height:28px;white-space:nowrap"><span style="display:inline-block;transform:scaleX(1.0);transform-origin:right">5.00 ms</span></div>
<div style="position:absolute;left:-47px;width:300px;top:874.5px;text-align:right;font:24px 'Liberation Sans', sans-serif;color:#ccccdc;line-height:28px;white-space:nowrap"><span style="display:inline-block;transform:scaleX(1.0);transform-origin:right">4.00 ms</span></div>
<div style="position:absolute;left:-47px;width:300px;top:942.3px;text-align:right;font:24px 'Liberation Sans', sans-serif;color:#ccccdc;line-height:28px;white-space:nowrap"><span style="display:inline-block;transform:scaleX(1.0);transform-origin:right">3.00 ms</span></div>
<div style="position:absolute;left:-47px;width:300px;top:1010.5px;text-align:right;font:24px 'Liberation Sans', sans-serif;color:#ccccdc;line-height:28px;white-space:nowrap"><span style="display:inline-block;transform:scaleX(1.0);transform-origin:right">2.00 ms</span></div>
<div style="position:absolute;left:-47px;width:300px;top:1077.3px;text-align:right;font:24px 'Liberation Sans', sans-serif;color:#ccccdc;line-height:28px;white-space:nowrap"><span style="display:inline-block;transform:scaleX(1.0);transform-origin:right">1.00 ms</span></div>
<div style="position:absolute;left:-47px;width:300px;top:1144.8px;text-align:right;font:24px 'Liberation Sans', sans-serif;color:#ccccdc;line-height:28px;white-space:nowrap"><span style="display:inline-block;transform:scaleX(1.0);transform-origin:right">0 s</span></div>
<div style="position:absolute;left:260.5px;width:120px;top:1176px;text-align:center;font:24px 'Liberation Sans', sans-serif;color:#ccccdc;line-height:28px">18:00</div>
<div style="position:absolute;left:394.0px;width:120px;top:1176px;text-align:center;font:24px 'Liberation Sans', sans-serif;color:#ccccdc;line-height:28px">18:30</div>
<div style="position:absolute;left:527.6px;width:120px;top:1176px;text-align:center;font:24px 'Liberation Sans', sans-serif;color:#ccccdc;line-height:28px">19:00</div>
<div style="position:absolute;left:661.1px;width:120px;top:1176px;text-align:center;font:24px 'Liberation Sans', sans-serif;color:#ccccdc;line-height:28px">19:30</div>
<div style="position:absolute;left:794.6px;width:120px;top:1176px;text-align:center;font:24px 'Liberation Sans', sans-serif;color:#ccccdc;line-height:28px">20:00</div>
<div style="position:absolute;left:928.1px;width:120px;top:1176px;text-align:center;font:24px 'Liberation Sans', sans-serif;color:#ccccdc;line-height:28px">20:30</div>
<div style="position:absolute;left:1061.7px;width:120px;top:1176px;text-align:center;font:24px 'Liberation Sans', sans-serif;color:#ccccdc;line-height:28px">21:00</div>
<div style="position:absolute;left:1195.2px;width:120px;top:1176px;text-align:center;font:24px 'Liberation Sans', sans-serif;color:#ccccdc;line-height:28px">21:30</div>
<div style="position:absolute;left:1328.7px;width:120px;top:1176px;text-align:center;font:24px 'Liberation Sans', sans-serif;color:#ccccdc;line-height:28px">22:00</div>
<div style="position:absolute;left:1462.3px;width:120px;top:1176px;text-align:center;font:24px 'Liberation Sans', sans-serif;color:#ccccdc;line-height:28px">22:30</div>
<div style="position:absolute;left:1595.8px;width:120px;top:1176px;text-align:center;font:24px 'Liberation Sans', sans-serif;color:#ccccdc;line-height:28px">23:00</div>
<div style="position:absolute;left:1729.3px;width:120px;top:1176px;text-align:center;font:24px 'Liberation Sans', sans-serif;color:#ccccdc;line-height:28px">23:30</div>
<div style="position:absolute;left:196.8px;top:1227px;width:28px;height:8px;border-radius:3px;background:#73BF69"></div>
<div style="position:absolute;left:241px;top:1217px;font:24px 'Liberation Sans', sans-serif;color:#ccccdc;line-height:28px;white-space:nowrap"><span style="display:inline-block;transform:scaleX(1.03);transform-origin:left">grafana-5c88db846-kbvgf</span></div>
<div style="position:absolute;left:542px;top:1227px;width:28px;height:8px;border-radius:3px;background:#F2CC0C"></div>
<div style="position:absolute;left:585.8px;top:1217px;font:24px 'Liberation Sans', sans-serif;color:#ccccdc;line-height:28px;white-space:nowrap"><span style="display:inline-block;transform:scaleX(1.031);transform-origin:left">hasura-auth-77c8d944f5-9rcl7</span></div>
<div style="position:absolute;left:936px;top:1227px;width:28px;height:8px;border-radius:3px;background:#8AB8FF"></div>
<div style="position:absolute;left:980px;top:1217px;font:24px 'Liberation Sans', sans-serif;color:#ccccdc;line-height:28px;white-space:nowrap"><span style="display:inline-block;transform:scaleX(1.029);transform-origin:left">hasura-d45b64dd4-7j4tx</span></div>
<div style="position:absolute;left:1266.7px;top:1227px;width:28px;height:8px;border-radius:3px;background:#FF780A"></div>
<div style="position:absolute;left:1310.4px;top:1217px;font:24px 'Liberation Sans', sans-serif;color:#ccccdc;line-height:28px;white-space:nowrap"><span style="display:inline-block;transform:scaleX(1.0275);transform-origin:left">hasura-storage-5bb87bfb7d-b5d44</span></div>
<div style="position:absolute;left:196.8px;top:1271px;width:28px;height:8px;border-radius:3px;background:#F2495C"></div>
<div style="position:absolute;left:241px;top:1261px;font:24px 'Liberation Sans', sans-serif;color:#ccccdc;line-height:28px;white-space:nowrap"><span style="display:inline-block;transform:scaleX(1.062);transform-origin:left">postgres-5df9f7ffb-hsjqp</span></div>
<svg style="position:absolute;left:0;top:0" width="3696" height="1935" viewBox="0 0 3696 1935"><line x1="2029.6" y1="848.5" x2="3649.5" y2="848.5" stroke="#303338" stroke-width="1" shape-rendering="crispEdges"/><line x1="2029.6" y1="911.5" x2="3649.5" y2="911.5" stroke="#303338" stroke-width="1" shape-rendering="crispEdges"/><line x1="2029.6" y1="974.5" x2="3649.5" y2="974.5" stroke="#303338" stroke-width="1" shape-rendering="crispEdges"/><line x1="2029.6" y1="1037.5" x2="3649.5" y2="1037.5" stroke="#303338" stroke-width="1" shape-rendering="crispEdges"/><line x1="2029.6" y1="1098.5" x2="3649.5" y2="1098.5" stroke="#303338" stroke-width="1" shape-rendering="crispEdges"/><line x1="2029.6" y1="1161.5" x2="3649.5" y2="1161.5" stroke="#303338" stroke-width="1" shape-rendering="crispEdges"/><line x1="2086.5" y1="818.2" x2="2086.5" y2="1169" stroke="#303338" stroke-width="1" shape-rendering="crispEdges"/><line x1="2220.5" y1="818.2" x2="2220.5" y2="1169" stroke="#303338" stroke-width="1" shape-rendering="crispEdges"/><line x1="2355.5" y1="818.2" x2="2355.5" y2="1169" stroke="#303338" stroke-width="1" shape-rendering="crispEdges"/><line x1="2489.5" y1="818.2" x2="2489.5" y2="1169" stroke="#303338" stroke-width="1" shape-rendering="crispEdges"/><line x1="2624.5" y1="818.2" x2="2624.5" y2="1169" stroke="#303338" stroke-width="1" shape-rendering="crispEdges"/><line x1="2758.5" y1="818.2" x2="2758.5" y2="1169" stroke="#303338" stroke-width="1" shape-rendering="crispEdges"/><line x1="2892.5" y1="818.2" x2="2892.5" y2="1169" stroke="#303338" stroke-width="1" shape-rendering="crispEdges"/><line x1="3027.5" y1="818.2" x2="3027.5" y2="1169" stroke="#303338" stroke-width="1" shape-rendering="crispEdges"/><line x1="3161.5" y1="818.2" x2="3161.5" y2="1169" stroke="#303338" stroke-width="1" shape-rendering="crispEdges"/><line x1="3296.5" y1="818.2" x2="3296.5" y2="1169" stroke="#303338" stroke-width="1" shape-rendering="crispEdges"/><line x1="3430.5" y1="818.2" x2="3430.5" y2="1169" stroke="#303338" stroke-width="1" shape-rendering="crispEdges"/><line x1="3564.5" y1="818.2" x2="3564.5" y2="1169" stroke="#303338" stroke-width="1" shape-rendering="crispEdges"/><polyline points="2037.1,1161.8 3645.0,1161.8" fill="none" stroke="#73BF69" stroke-width="2.0" stroke-linejoin="round"/><polyline points="2037.1,1161.8 3089.1,1161.8 3097.9,847.5 3106.7,1161.8 3645.0,1161.8" fill="none" stroke="#F2CC0C" stroke-width="2.0" stroke-linejoin="round"/><polyline points="2037.1,1161.8 2623.6,1161.8 2632.4,1157.3 2641.2,1161.8 3224.2,1161.8 3233.0,1157.3 3241.8,1161.8 3518.4,1161.8 3527.2,1157.3 3536.0,1161.8 3645.0,1161.8" fill="none" stroke="#8AB8FF" stroke-width="2.0" stroke-linejoin="round"/><polyline points="2037.1,1161.8 3645.0,1161.8" fill="none" stroke="#FF780A" stroke-width="2.0" stroke-linejoin="round"/><polyline points="2037.1,1161.8 2900.0,1161.8" fill="none" stroke="#F2495C" stroke-width="2.0" stroke-linejoin="round"/><polyline points="2918.5,1161.8 3645.0,1161.8" fill="none" stroke="#F2495C" stroke-width="2.0" stroke-linejoin="round"/></svg>
<div style="position:absolute;left:1719.5px;width:300px;top:831.8px;text-align:right;font:24px 'Liberation Sans', sans-serif;color:#ccccdc;line-height:28px;white-space:nowrap"><span style="display:inline-block;transform:scaleX(0.95);transform-origin:right">50.00%</span></div>
<div style="position:absolute;left:1719.5px;width:300px;top:894.6999999999999px;text-align:right;font:24px 'Liberation Sans', sans-serif;color:#ccccdc;line-height:28px;white-space:nowrap"><span style="display:inline-block;transform:scaleX(0.95);transform-origin:right">40.00%</span></div>
<div style="position:absolute;left:1719.5px;width:300px;top:957.5999999999999px;text-align:right;font:24px 'Liberation Sans', sans-serif;color:#ccccdc;line-height:28px;white-space:nowrap"><span style="display:inline-block;transform:scaleX(0.95);transform-origin:right">30.00%</span></div>
<div style="position:absolute;left:1719.5px;width:300px;top:1020.5999999999999px;text-align:right;font:24px 'Liberation Sans', sans-serif;color:#ccccdc;line-height:28px;white-space:nowrap"><span style="display:inline-block;transform:scaleX(0.95);transform-origin:right">20.00%</span></div>
<div style="position:absolute;left:1719.5px;width:300px;top:1082.2px;text-align:right;font:24px 'Liberation Sans', sans-serif;color:#ccccdc;line-height:28px;white-space:nowrap"><span style="display:inline-block;transform:scaleX(0.95);transform-origin:right">10.00%</span></div>
<div style="position:absolute;left:1719.5px;width:300px;top:1144.8px;text-align:right;font:24px 'Liberation Sans', sans-serif;color:#ccccdc;line-height:28px;white-space:nowrap"><span style="display:inline-block;transform:scaleX(0.95);transform-origin:right">0.00%</span></div>
<div style="position:absolute;left:2026.4px;width:120px;top:1176px;text-align:center;font:24px 'Liberation Sans', sans-serif;color:#ccccdc;line-height:28px">18:00</div>
<div style="position:absolute;left:2160.8px;width:120px;top:1176px;text-align:center;font:24px 'Liberation Sans', sans-serif;color:#ccccdc;line-height:28px">18:30</div>
<div style="position:absolute;left:2295.2px;width:120px;top:1176px;text-align:center;font:24px 'Liberation Sans', sans-serif;color:#ccccdc;line-height:28px">19:00</div>
<div style="position:absolute;left:2429.6px;width:120px;top:1176px;text-align:center;font:24px 'Liberation Sans', sans-serif;color:#ccccdc;line-height:28px">19:30</div>
<div style="position:absolute;left:2564.0px;width:120px;top:1176px;text-align:center;font:24px 'Liberation Sans', sans-serif;color:#ccccdc;line-height:28px">20:00</div>
<div style="position:absolute;left:2698.4px;width:120px;top:1176px;text-align:center;font:24px 'Liberation Sans', sans-serif;color:#ccccdc;line-height:28px">20:30</div>
<div style="position:absolute;left:2832.8px;width:120px;top:1176px;text-align:center;font:24px 'Liberation Sans', sans-serif;color:#ccccdc;line-height:28px">21:00</div>
<div style="position:absolute;left:2967.2px;width:120px;top:1176px;text-align:center;font:24px 'Liberation Sans', sans-serif;color:#ccccdc;line-height:28px">21:30</div>
<div style="position:absolute;left:3101.6px;width:120px;top:1176px;text-align:center;font:24px 'Liberation Sans', sans-serif;color:#ccccdc;line-height:28px">22:00</div>
<div style="position:absolute;left:3236.0px;width:120px;top:1176px;text-align:center;font:24px 'Liberation Sans', sans-serif;color:#ccccdc;line-height:28px">22:30</div>
<div style="position:absolute;left:3370.4px;width:120px;top:1176px;text-align:center;font:24px 'Liberation Sans', sans-serif;color:#ccccdc;line-height:28px">23:00</div>
<div style="position:absolute;left:3504.8px;width:120px;top:1176px;text-align:center;font:24px 'Liberation Sans', sans-serif;color:#ccccdc;line-height:28px">23:30</div>
<div style="position:absolute;left:1973.3px;top:1227px;width:28px;height:8px;border-radius:3px;background:#73BF69"></div>
<div style="position:absolute;left:2017.5px;top:1217px;font:24px 'Liberation Sans', sans-serif;color:#ccccdc;line-height:28px;white-space:nowrap"><span style="display:inline-block;transform:scaleX(1.03);transform-origin:left">grafana-5c88db846-kbvgf</span></div>
<div style="position:absolute;left:2318.5px;top:1227px;width:28px;height:8px;border-radius:3px;background:#F2CC0C"></div>
<div style="position:absolute;left:2362.3px;top:1217px;font:24px 'Liberation Sans', sans-serif;color:#ccccdc;line-height:28px;white-space:nowrap"><span style="display:inline-block;transform:scaleX(1.031);transform-origin:left">hasura-auth-77c8d944f5-9rcl7</span></div>
<div style="position:absolute;left:2712.5px;top:1227px;width:28px;height:8px;border-radius:3px;background:#8AB8FF"></div>
<div style="position:absolute;left:2756.5px;top:1217px;font:24px 'Liberation Sans', sans-serif;color:#ccccdc;line-height:28px;white-space:nowrap"><span style="display:inline-block;transform:scaleX(1.029);transform-origin:left">hasura-d45b64dd4-7j4tx</span></div>
<div style="position:absolute;left:3043.2px;top:1227px;width:28px;height:8px;border-radius:3px;background:#FF780A"></div>
<div style="position:absolute;left:3086.9px;top:1217px;font:24px 'Liberation Sans', sans-serif;color:#ccccdc;line-height:28px;white-space:nowrap"><span style="display:inline-block;transform:scaleX(1.0275);transform-origin:left">hasura-storage-5bb87bfb7d-b5d44</span></div>
<div style="position:absolute;left:1973.3px;top:1271px;width:28px;height:8px;border-radius:3px;background:#F2495C"></div>
<div style="position:absolute;left:2017.5px;top:1261px;font:24px 'Liberation Sans', sans-serif;color:#ccccdc;line-height:28px;white-space:nowrap"><span style="display:inline-block;transform:scaleX(1.062);transform-origin:left">postgres-5df9f7ffb-hsjqp</span></div>
<svg style="position:absolute;left:0;top:0" width="3696" height="1935" viewBox="0 0 3696 1935"><line x1="265.5" y1="1476.5" x2="1873.3" y2="1476.5" stroke="#303338" stroke-width="1" shape-rendering="crispEdges"/><line x1="265.5" y1="1548.5" x2="1873.3" y2="1548.5" stroke="#303338" stroke-width="1" shape-rendering="crispEdges"/><line x1="265.5" y1="1621.5" x2="1873.3" y2="1621.5" stroke="#303338" stroke-width="1" shape-rendering="crispEdges"/><line x1="265.5" y1="1693.5" x2="1873.3" y2="1693.5" stroke="#303338" stroke-width="1" shape-rendering="crispEdges"/><line x1="322.5" y1="1426" x2="322.5" y2="1734.4" stroke="#303338" stroke-width="1" shape-rendering="crispEdges"/><line x1="455.5" y1="1426" x2="455.5" y2="1734.4" stroke="#303338" stroke-width="1" shape-rendering="crispEdges"/><line x1="588.5" y1="1426" x2="588.5" y2="1734.4" stroke="#303338" stroke-width="1" shape-rendering="crispEdges"/><line x1="722.5" y1="1426" x2="722.5" y2="1734.4" stroke="#303338" stroke-width="1" shape-rendering="crispEdges"/><line x1="855.5" y1="1426" x2="855.5" y2="1734.4" stroke="#303338" stroke-width="1" shape-rendering="crispEdges"/><line x1="988.5" y1="1426" x2="988.5" y2="1734.4" stroke="#303338" stroke-width="1" shape-rendering="crispEdges"/><line x1="1122.5" y1="1426" x2="1122.5" y2="1734.4" stroke="#303338" stroke-width="1" shape-rendering="crispEdges"/><line x1="1255.5" y1="1426" x2="1255.5" y2="1734.4" stroke="#303338" stroke-width="1" shape-rendering="crispEdges"/><line x1="1388.5" y1="1426" x2="1388.5" y2="1734.4" stroke="#303338" stroke-width="1" shape-rendering="crispEdges"/><line x1="1521.5" y1="1426" x2="1521.5" y2="1734.4" stroke="#303338" stroke-width="1" shape-rendering="crispEdges"/><line x1="1655.5" y1="1426" x2="1655.5" y2="1734.4" stroke="#303338" stroke-width="1" shape-rendering="crispEdges"/><line x1="1788.5" y1="1426" x2="1788.5" y2="1734.4" stroke="#303338" stroke-width="1" shape-rendering="crispEdges"/><polyline points="272.8,1693.0 1859.7,1693.0 1868.0,1450.6" fill="none" stroke="#73BF69" stroke-width="2.0" stroke-linejoin="round"/><polyline points="272.8,1690.6 1868.0,1690.6" fill="none" stroke="#8AB8FF" stroke-width="2" stroke-linejoin="round"/><polyline points="272.8,1691.3 336.4,1691.3" fill="none" stroke="#F2495C" stroke-width="2" stroke-linejoin="round"/><polyline points="430.6,1691.3 506.2,1691.3" fill="none" stroke="#F2495C" stroke-width="2" stroke-linejoin="round"/><polyline points="620.5,1691.3 692.3,1691.3" fill="none" stroke="#F2495C" stroke-width="2" stroke-linejoin="round"/><polyline points="804.5,1691.3 826.5,1691.3" fill="none" stroke="#F2495C" stroke-width="2" stroke-linejoin="round"/><polyline points="893.1,1691.3 979.1,1691.3" fill="none" stroke="#F2495C" stroke-width="2" stroke-linejoin="round"/><polyline points="1064.0,1691.3 1147.1,1691.3" fill="none" stroke="#F2495C" stroke-width="2" stroke-linejoin="round"/><polyline points="1178.4,1691.3 1231.3,1691.3" fill="none" stroke="#F2495C" stroke-width="2" stroke-linejoin="round"/><polyline points="1275.9,1691.3 1334.0,1691.3" fill="none" stroke="#F2495C" stroke-width="2" stroke-linejoin="round"/><polyline points="1411.4,1691.3 1432.3,1691.3" fill="none" stroke="#F2495C" stroke-width="2" stroke-linejoin="round"/><polyline points="1474.0,1691.3 1513.5,1691.3" fill="none" stroke="#F2495C" stroke-width="2" stroke-linejoin="round"/><polyline points="1625.2,1691.3 1698.8,1691.3" fill="none" stroke="#F2495C" stroke-width="2" stroke-linejoin="round"/><polyline points="1734.7,1691.3 1810.5,1691.3" fill="none" stroke="#F2495C" stroke-width="2" stroke-linejoin="round"/><polyline points="1844.4,1691.3 1868.0,1691.3" fill="none" stroke="#F2495C" stroke-width="2" stroke-linejoin="round"/><polyline points="272.8,1693.1 1868.0,1693.1" fill="none" stroke="#37872D" stroke-width="2.2" stroke-linejoin="round"/><polyline points="272.8,1695.1 334.0,1695.1 339.8,1693.6 345.6,1695.1 440.4,1695.1 446.2,1693.6 452.0,1695.1 1420.0,1695.1 1426.0,1693.6 1432.0,1695.1 1868.0,1695.1" fill="none" stroke="#FADE2A" stroke-width="2.2" stroke-linejoin="round"/></svg>
<div style="position:absolute;left:-44px;width:300px;top:1459.8999999999999px;text-align:right;font:24px 'Liberation Sans', sans-serif;color:#ccccdc;line-height:28px;white-space:nowrap"><span style="display:inline-block;transform:scaleX(1.0);transform-origin:right">58.6 KiB</span></div>
<div style="position:absolute;left:-44px;width:300px;top:1531.6px;text-align:right;font:24px 'Liberation Sans', sans-serif;color:#ccccdc;line-height:28px;white-space:nowrap"><span style="display:inline-block;transform:scaleX(1.0);transform-origin:right">39.1 KiB</span></div>
<div style="position:absolute;left:-44px;width:300px;top:1604.7px;text-align:right;font:24px 'Liberation Sans', sans-serif;color:#ccccdc;line-height:28px;white-space:nowrap"><span style="display:inline-block;transform:scaleX(1.0);transform-origin:right">19.5 KiB</span></div>
<div style="position:absolute;left:-44px;width:300px;top:1676.7px;text-align:right;font:24px 'Liberation Sans', sans-serif;color:#ccccdc;line-height:28px;white-space:nowrap"><span style="display:inline-block;transform:scaleX(1.0);transform-origin:right">0 B</span></div>
<div style="position:absolute;left:262.4px;width:120px;top:1739px;text-align:center;font:24px 'Liberation Sans', sans-serif;color:#ccccdc;line-height:28px">18:00</div>
<div style="position:absolute;left:395.7px;width:120px;top:1739px;text-align:center;font:24px 'Liberation Sans', sans-serif;color:#ccccdc;line-height:28px">18:30</div>
<div style="position:absolute;left:529.0px;width:120px;top:1739px;text-align:center;font:24px 'Liberation Sans', sans-serif;color:#ccccdc;line-height:28px">19:00</div>
<div style="position:absolute;left:662.2px;width:120px;top:1739px;text-align:center;font:24px 'Liberation Sans', sans-serif;color:#ccccdc;line-height:28px">19:30</div>
<div style="position:absolute;left:795.5px;width:120px;top:1739px;text-align:center;font:24px 'Liberation Sans', sans-serif;color:#ccccdc;line-height:28px">20:00</div>
<div style="position:absolute;left:928.8px;width:120px;top:1739px;text-align:center;font:24px 'Liberation Sans', sans-serif;color:#ccccdc;line-height:28px">20:30</div>
<div style="position:absolute;left:1062.1px;width:120px;top:1739px;text-align:center;font:24px 'Liberation Sans', sans-serif;color:#ccccdc;line-height:28px">21:00</div>
<div style="position:absolute;left:1195.4px;width:120px;top:1739px;text-align:center;font:24px 'Liberation Sans', sans-serif;color:#ccccdc;line-height:28px">21:30</div>
<div style="position:absolute;left:1328.6px;width:120px;top:1739px;text-align:center;font:24px 'Liberation Sans', sans-serif;color:#ccccdc;line-height:28px">22:00</div>
<div style="position:absolute;left:1461.9px;width:120px;top:1739px;text-align:center;font:24px 'Liberation Sans', sans-serif;color:#ccccdc;line-height:28px">22:30</div>
<div style="position:absolute;left:1595.2px;width:120px;top:1739px;text-align:center;font:24px 'Liberation Sans', sans-serif;color:#ccccdc;line-height:28px">23:00</div>
<div style="position:absolute;left:1728.5px;width:120px;top:1739px;text-align:center;font:24px 'Liberation Sans', sans-serif;color:#ccccdc;line-height:28px">23:30</div>
<div style="position:absolute;left:196.8px;top:1790px;width:28px;height:8px;border-radius:3px;background:#73BF69"></div>
<div style="position:absolute;left:241px;top:1780px;font:24px 'Liberation Sans', sans-serif;color:#ccccdc;line-height:28px;white-space:nowrap"><span style="display:inline-block;transform:scaleX(1.03);transform-origin:left">grafana-5c88db846-kbvgf</span></div>
<div style="position:absolute;left:542px;top:1790px;width:28px;height:8px;border-radius:3px;background:#F2CC0C"></div>
<div style="position:absolute;left:585.8px;top:1780px;font:24px 'Liberation Sans', sans-serif;color:#ccccdc;line-height:28px;white-space:nowrap"><span style="display:inline-block;transform:scaleX(1.031);transform-origin:left">hasura-auth-77c8d944f5-9rcl7</span></div>
<div style="position:absolute;left:936px;top:1790px;width:28px;height:8px;border-radius:3px;background:#8AB8FF"></div>
<div style="position:absolute;left:980px;top:1780px;font:24px 'Liberation Sans', sans-serif;color:#ccccdc;line-height:28px;white-space:nowrap"><span style="display:inline-block;transform:scaleX(1.029);transform-origin:left">hasura-d45b64dd4-7j4tx</span></div>
<div style="position:absolute;left:1266.7px;top:1790px;width:28px;height:8px;border-radius:3px;background:#FF780A"></div>
<div style="position:absolute;left:1310.4px;top:1780px;font:24px 'Liberation Sans', sans-serif;color:#ccccdc;line-height:28px;white-space:nowrap"><span style="display:inline-block;transform:scaleX(1.0275);transform-origin:left">hasura-storage-5bb87bfb7d-b5d44</span></div>
<div style="position:absolute;left:196.8px;top:1835.2px;width:28px;height:8px;border-radius:3px;background:#F2495C"></div>
<div style="position:absolute;left:241px;top:1825.2px;font:24px 'Liberation Sans', sans-serif;color:#ccccdc;line-height:28px;white-space:nowrap"><span style="display:inline-block;transform:scaleX(1.062);transform-origin:left">postgres-5df9f7ffb-hsjqp</span></div>
<div style="position:absolute;left:534px;top:1835.2px;width:28px;height:8px;border-radius:3px;background:#5794F2"></div>
<div style="position:absolute;left:578px;top:1825.2px;font:24px 'Liberation Sans', sans-serif;color:#ccccdc;line-height:28px;white-space:nowrap"><span style="display:inline-block;transform:scaleX(1.03);transform-origin:left">grafana-5c88db846-kbvgf</span></div>
<div style="position:absolute;left:879.8px;top:1835.2px;width:28px;height:8px;border-radius:3px;background:#B877D9"></div>
<div style="position:absolute;left:923px;top:1825.2px;font:24px 'Liberation Sans', sans-serif;color:#ccccdc;line-height:28px;white-space:nowrap"><span style="display:inline-block;transform:scaleX(1.031);transform-origin:left">hasura-auth-77c8d944f5-9rcl7</span></div>
<div style="position:absolute;left:1273px;top:1835.2px;width:28px;height:8px;border-radius:3px;background:#705DA0"></div>
<div style="position:absolute;left:1317px;top:1825.2px;font:24px 'Liberation Sans', sans-serif;color:#ccccdc;line-height:28px;white-space:nowrap"><span style="display:inline-block;transform:scaleX(1.029);transform-origin:left">hasura-d45b64dd4-7j4tx</span></div>
<div style="position:absolute;left:196.8px;top:1879.2px;width:28px;height:8px;border-radius:3px;background:#37872D"></div>
<div style="position:absolute;left:241px;top:1869.2px;font:24px 'Liberation Sans', sans-serif;color:#ccccdc;line-height:28px;white-space:nowrap"><span style="display:inline-block;transform:scaleX(1.0275);transform-origin:left">hasura-storage-5bb87bfb7d-b5d44</span></div>
<div style="position:absolute;left:640px;top:1879.2px;width:28px;height:8px;border-radius:3px;background:#FADE2A"></div>
<div style="position:absolute;left:684px;top:1869.2px;font:24px 'Liberation Sans', sans-serif;color:#ccccdc;line-height:28px;white-space:nowrap"><span style="display:inline-block;transform:scaleX(1.062);transform-origin:left">postgres-5df9f7ffb-hsjqp</span></div>
<div style="position:absolute;left:115px;top:0;width:3581px;height:113px;background:#111217"></div>
<svg style="position:absolute;left:146.9px;top:38.9px" width="36" height="36" viewBox="0 0 24 24"><path fill="#cfcfdc" d="M10,13H3a1,1,0,0,0-1,1v7a1,1,0,0,0,1,1h7a1,1,0,0,0,1-1V14A1,1,0,0,0,10,13ZM9,20H4V15H9ZM21,2H14a1,1,0,0,0-1,1v7a1,1,0,0,0,1,1h7a1,1,0,0,0,1-1V3A1,1,0,0,0,21,2ZM20,9H15V4h5Zm1,4H14a1,1,0,0,0-1,1v7a1,1,0,0,0,1,1h7a1,1,0,0,0,1-1V14A1,1,0,0,0,21,13Zm-1,7H15V15h5ZM10,2H3A1,1,0,0,0,2,3v7a1,1,0,0,0,1,1h7a1,1,0,0,0,1-1V3A1,1,0,0,0,10,2ZM9,9H4V4H9Z"/></svg>
<div style="position:absolute;left:199px;top:35.5px;font:36px 'Liberation Sans', sans-serif;color:#ccccdc;white-space:nowrap;line-height:44px"><span style="display:inline-block;transform:scaleX(0.97);transform-origin:left">General</span></div>
<svg style="position:absolute;left:330px;top:35px" width="30" height="45" viewBox="0 0 30 45"><path d="M11.2 37.6L22.4 9.2" stroke="#ccccdc" stroke-width="2.9" stroke-linecap="butt"/></svg>
<div style="position:absolute;left:362px;top:35.5px;font:36px 'Liberation Sans', sans-serif;color:#ccccdc;white-space:nowrap;line-height:44px"><span style="display:inline-block;transform:scaleX(0.992);transform-origin:left">Project Metrics</span></div>
<svg style="position:absolute;left:614px;top:38.7px" width="36" height="36" viewBox="0 0 24 24"><path fill="#cfcfdc" d="M22,9.67A1,1,0,0,0,21.14,9l-5.69-.83L12.9,3a1,1,0,0,0-1.8,0L8.55,8.16,2.86,9a1,1,0,0,0-.81.68,1,1,0,0,0,.25,1l4.13,4-1,5.68A1,1,0,0,0,6.9,21.44L12,18.77l5.1,2.67a.93.93,0,0,0,.46.12,1,1,0,0,0,.59-.19,1,1,0,0,0,.4-1l-1-5.68,4.13-4A1,1,0,0,0,22,9.67Zm-6.15,4a1,1,0,0,0-.29.88l.72,4.2-3.76-2a1.06,1.06,0,0,0-.94,0l-3.76,2,.72-4.2a1,1,0,0,0-.29-.88l-3-3,4.21-.61a1,1,0,0,0,.76-.55L12,5.7l1.88,3.82a1,1,0,0,0,.76.55l4.21.61Z"/></svg>
<svg style="position:absolute;left:682px;top:38.9px" width="36" height="36" viewBox="0 0 24 24"><path fill="#cfcfdc" d="M18,14a4,4,0,0,0-3.08,1.48l-5.1-2.35a3.64,3.64,0,0,0,0-2.26l5.1-2.35A4,4,0,1,0,14,6a4.17,4.17,0,0,0,.07.71L8.79,9.14a4,4,0,1,0,0,5.72l5.28,2.43A4.17,4.17,0,0,0,14,18a4,4,0,1,0,4-4ZM18,4a2,2,0,1,1-2,2A2,2,0,0,1,18,4ZM6,14a2,2,0,1,1,2-2A2,2,0,0,1,6,14Zm12,6a2,2,0,1,1,2-2A2,2,0,0,1,18,20Z"/></svg>
<div style="position:absolute;left:2794px;top:25px;width:84px;height:64px;box-sizing:border-box;background:#181b1f;border:2px solid #2a2d33;border-radius:4px"></div>
<div style="position:absolute;left:2894px;top:25px;width:72px;height:64px;box-sizing:border-box;background:#181b1f;border:2px solid #2a2d33;border-radius:4px"></div>
<div style="position:absolute;left:2982px;top:25px;width:72px;height:64px;box-sizing:border-box;background:#181b1f;border:2px solid #2a2d33;border-radius:4px"></div>
<div style="position:absolute;left:3070.6px;top:25px;width:368.4000000000001px;height:64px;box-sizing:border-box;background:#181b1f;border:2px solid #2a2d33;border-radius:4px"></div>
<div style="position:absolute;left:3367px;top:25px;width:2px;height:64px;background:#2a2d33"></div>
<div style="position:absolute;left:3455px;top:25px;width:138px;height:64px;box-sizing:border-box;background:#181b1f;border:2px solid #2a2d33;border-radius:4px"></div>
<div style="position:absolute;left:3525px;top:25px;width:2px;height:64px;background:#2a2d33"></div>
<div style="position:absolute;left:3609px;top:25px;width:72px;height:64px;box-sizing:border-box;background:#181b1f;border:2px solid #2a2d33;border-radius:4px"></div>
<svg style="position:absolute;left:2810px;top:40px" width="52" height="34" viewBox="0 0 52 34"><defs><linearGradient id="pg" gradientUnits="userSpaceOnUse" x1="0" y1="8" x2="0" y2="26"><stop offset="0" stop-color="#F47A30"/><stop offset="0.5" stop-color="#F5A030"/><stop offset="1" stop-color="#FFC90E"/></linearGradient></defs><rect x="2" y="13.5" width="7" height="16.5" rx="0.6" fill="#8e8e99"/><rect x="10.5" y="8" width="7" height="22" rx="0.6" fill="#8e8e99"/><rect x="19" y="17.5" width="7" height="12.5" rx="0.6" fill="#8e8e99"/><rect x="27.5" y="4" width="7" height="26" rx="0.6" fill="#8e8e99"/><path d="M38.4 8h5.8v5.8H50V20h-5.8v5.9h-5.8V20h-6V13.8h6z" fill="#181b1f" stroke="#181b1f" stroke-width="4" stroke-linejoin="round"/><path d="M38.4 8h5.8v5.8H50V20h-5.8v5.9h-5.8V20h-6V13.8h6z" fill="url(#pg)"/></svg>
<svg style="position:absolute;left:2911.5px;top:38.7px" width="36" height="36" viewBox="0 0 24 24"><path fill="#8e8e99" d="M20.71,9.29l-6-6a1,1,0,0,0-.32-.21A1.09,1.09,0,0,0,14,3H6A3,3,0,0,0,3,6V18a3,3,0,0,0,3,3H18a3,3,0,0,0,3-3V10A1,1,0,0,0,20.71,9.29ZM9,5h4V7H9Zm6,14H9V16a1,1,0,0,1,1-1h4a1,1,0,0,1,1,1Zm4-1a1,1,0,0,1-1,1H17V16a3,3,0,0,0-3-3H10a3,3,0,0,0-3,3v3H6a1,1,0,0,1-1-1V6A1,1,0,0,1,6,5H7V8a1,1,0,0,0,1,1h6a1,1,0,0,0,1-1V6.41l4,4Z"/></svg>
<svg style="position:absolute;left:2999.7px;top:38.7px" width="36" height="36" viewBox="0 0 24 24"><path fill="#8e8e99" d="M21.32,9.55l-1.89-.63.89-1.78A1,1,0,0,0,20.13,6L18,3.87a1,1,0,0,0-1.15-.19l-1.78.89-.63-1.89A1,1,0,0,0,13.5,2h-3a1,1,0,0,0-.95.68L8.92,4.57,7.14,3.68A1,1,0,0,0,6,3.87L3.87,6a1,1,0,0,0-.19,1.15l.89,1.78-1.89.63A1,1,0,0,0,2,10.5v3a1,1,0,0,0,.68.95l1.89.63-.89,1.78A1,1,0,0,0,3.87,18L6,20.13a1,1,0,0,0,1.15.19l1.78-.89.63,1.89a1,1,0,0,0,.95.68h3a1,1,0,0,0,.95-.68l.63-1.89,1.78.89A1,1,0,0,0,18,20.130L20.13,18a1,1,0,0,0,.19-1.15l-.89-1.78,1.890-.63A1,1,0,0,0,22,13.5v-3A1,1,0,0,0,21.32,9.55ZM20,12.78l-1.2.4A2,2,0,0,0,17.64,16l.57,1.14-1.1,1.1L16,17.64a2,2,0,0,0-2.79,1.16l-.4,1.2H11.22l-.4-1.2A2,2,0,0,0,8,17.64l-1.14.57-1.1-1.1L6.36,16A2,2,0,0,0,5.2,13.18L4,12.78V11.22l1.2-.4A2,2,0,0,0,6.36,8L5.79,6.89l1.1-1.1L8,6.36A2,2,0,0,0,10.82,5.2l.4-1.2h1.56l.4,1.2A2,2,0,0,0,16,6.36l1.14-.57,1.1,1.1L17.64,8a2,2,0,0,0,1.16,2.79l1.2.4ZM12,8a4,4,0,1,0,4,4A4,4,0,0,0,12,8Zm0,6a2,2,0,1,1,2-2A2,2,0,0,1,12,14Z"/></svg>
<svg style="position:absolute;left:3087.7px;top:38.8px" width="36" height="36" viewBox="0 0 24 24"><path fill="#8e8e99" d="M12,2A10,10,0,1,0,22,12,10,10,0,0,0,12,2Zm0,18a8,8,0,1,1,8-8A8,8,0,0,1,12,20Zm0-14a1,1,0,0,0-1,1v4H9a1,1,0,0,0,0,2h3a1,1,0,0,0,1-1V7A1,1,0,0,0,12,6Z"/></svg>
<div style="position:absolute;left:3140px;top:38px;font:28px 'Liberation Sans', sans-serif;color:#a3a3ae;white-space:nowrap;line-height:38px;-webkit-text-stroke:0.6px #a3a3ae"><span style="display:inline-block;transform:scaleX(1.01);transform-origin:left">Last 6 hours</span></div>
<svg style="position:absolute;left:3318.9px;top:40.9px" width="32" height="32" viewBox="0 0 24 24"><path fill="#8e8e99" d="M17,9.17a1,1,0,0,0-1.41,0L12,12.71,8.46,9.17a1,1,0,0,0-1.41,0,1,1,0,0,0,0,1.42l4.24,4.24a1,1,0,0,0,1.42,0L17,10.59A1,1,0,0,0,17,9.17Z"/></svg>
<svg style="position:absolute;left:3385px;top:38.8px" width="36" height="36" viewBox="0 0 24 24"><path fill="#8e8e99" d="M21.71,20.29,18,16.61A9,9,0,1,0,16.61,18l3.68,3.68a1,1,0,0,0,1.42,0A1,1,0,0,0,21.71,20.29ZM11,18a7,7,0,1,1,7-7A7,7,0,0,1,11,18Zm4-8H7a1,1,0,0,0,0,2h8a1,1,0,0,0,0-2Z"/></svg>
<svg style="position:absolute;left:3472.8px;top:38.8px" width="36" height="36" viewBox="0 0 24 24"><path fill="#8e8e99" d="M19.91,15.51H15.38a1,1,0,0,0,0,2h2.4A8,8,0,0,1,4,12a1,1,0,0,0-2,0,10,10,0,0,0,16.88,7.23V21a1,1,0,0,0,2,0V16.5A1,1,0,0,0,19.91,15.51ZM12,2A10,10,0,0,0,5.12,4.77V3a1,1,0,0,0-2,0V7.5a1,1,0,0,0,1,1h4.5a1,1,0,0,0,0-2H6.22A8,8,0,0,1,20,12a1,1,0,0,0,2,0A10,10,0,0,0,12,2Z"/></svg>
<svg style="position:absolute;left:3542.8px;top:40.9px" width="32" height="32" viewBox="0 0 24 24"><path fill="#8e8e99" d="M17,9.17a1,1,0,0,0-1.41,0L12,12.71,8.46,9.17a1,1,0,0,0-1.41,0,1,1,0,0,0,0,1.42l4.24,4.24a1,1,0,0,0,1.42,0L17,10.59A1,1,0,0,0,17,9.17Z"/></svg>
<svg style="position:absolute;left:3626.8px;top:38.8px" width="36" height="36" viewBox="0 0 24 24" fill="none" stroke="#8e8e99" stroke-width="2" stroke-linecap="round" stroke-linejoin="round" ><rect x="3" y="3" width="18" height="13.4" rx="2.2"/><path d="M3.4 11.6h17.2"/><path d="M9.3 16.6l-.7 2.2a.8.8 0 0 0 .8 1.1h5.2a.8.8 0 0 0 .8-1.1l-.7-2.2"/></svg>
<div style="position:absolute;left:0;top:0;width:113px;height:1935px;background:#181b1f;border-right:2px solid #24272d"></div>
<div style="position:absolute;left:0;top:0;width:1px;height:1935px;background:#141112"></div>
<svg style="position:absolute;left:28px;top:36px" width="60" height="60" viewBox="0 0 60 60"><defs><linearGradient id="lg" gradientUnits="userSpaceOnUse" x1="0" y1="6" x2="0" y2="53"><stop offset="0" stop-color="#EE5428"/><stop offset="0.3" stop-color="#F06526"/><stop offset="1" stop-color="#FBCF0A"/></linearGradient></defs><path fill="url(#lg)" d="M30.9 5.1 Q33.26 8.75 35.6 9.8 Q40.06 11.22 45.4 10.2 Q45.22 13.84 46.6 15.4 Q51.89 20.48 51.8 28.2 L48.4 33.2 L51.2 40 Q47.62 40.50 46.1 42.6 Q41.83 46.48 38.7 52.7 Q36.09 50.06 33.8 50.0 Q26.25 49.13 17.8 50.7 Q18.57 46.08 17.6 43.4 Q12.99 38.34 6 34.3 Q10.45 30.97 12.3 27.8 Q12.80 21.04 10.9 13.3 Q17.20 14.14 21.6 13.2 Q26.69 10.37 30.9 5.1z"/><circle cx="33.6" cy="29.1" r="10.8" fill="none" stroke="#181b1f" stroke-width="6.5"/><path d="M45.5 24 L52.8 28.6 52.8 33.6 44 33.6z" fill="#181b1f"/><circle cx="35.9" cy="32.3" r="6.6" fill="#181b1f"/><circle cx="35.9" cy="32.3" r="7.8" fill="none" stroke="#F27A22" stroke-width="2.6" stroke-dasharray="42.5 6.5" transform="rotate(78 35.9 32.3)"/></svg>
<svg style="position:absolute;left:32.8px;top:136.8px" width="48" height="48" viewBox="0 0 24 24"><path fill="#8e8e99" d="M21.71,20.29,18,16.61A9,9,0,1,0,16.61,18l3.68,3.68a1,1,0,0,0,1.42,0A1,1,0,0,0,21.71,20.29ZM11,18a7,7,0,1,1,7-7A7,7,0,0,1,11,18Z"/></svg>
<svg style="position:absolute;left:32.9px;top:232.9px" width="48" height="48" viewBox="0 0 24 24"><path fill="#8e8e99" d="M22,9.67A1,1,0,0,0,21.14,9l-5.69-.83L12.9,3a1,1,0,0,0-1.8,0L8.55,8.16,2.86,9a1,1,0,0,0-.81.68,1,1,0,0,0,.25,1l4.13,4-1,5.68A1,1,0,0,0,6.9,21.44L12,18.77l5.1,2.67a.93.93,0,0,0,.46.12,1,1,0,0,0,.59-.19,1,1,0,0,0,.4-1l-1-5.68,4.13-4A1,1,0,0,0,22,9.67Zm-6.15,4a1,1,0,0,0-.29.88l.72,4.2-3.76-2a1.06,1.06,0,0,0-.94,0l-3.76,2,.72-4.2a1,1,0,0,0-.29-.88l-3-3,4.21-.61a1,1,0,0,0,.76-.55L12,5.7l1.88,3.82a1,1,0,0,0,.76.55l4.21.61Z"/></svg>
<div style="position:absolute;left:16.5px;top:329px;width:8px;height:48px;border-radius:4px;background:linear-gradient(#FF8833,#F0573B)"></div>
<svg style="position:absolute;left:32.8px;top:328.7px" width="48" height="48" viewBox="0 0 24 24"><path fill="#cfcfdc" d="M10,13H3a1,1,0,0,0-1,1v7a1,1,0,0,0,1,1h7a1,1,0,0,0,1-1V14A1,1,0,0,0,10,13ZM9,20H4V15H9ZM21,2H14a1,1,0,0,0-1,1v7a1,1,0,0,0,1,1h7a1,1,0,0,0,1-1V3A1,1,0,0,0,21,2ZM20,9H15V4h5Zm1,4H14a1,1,0,0,0-1,1v7a1,1,0,0,0,1,1h7a1,1,0,0,0,1-1V14A1,1,0,0,0,21,13Zm-1,7H15V15h5ZM10,2H3A1,1,0,0,0,2,3v7a1,1,0,0,0,1,1h7a1,1,0,0,0,1-1V3A1,1,0,0,0,10,2ZM9,9H4V4H9Z"/></svg>
<svg style="position:absolute;left:32.8px;top:425px" width="48" height="48" viewBox="0 0 24 24" fill="none" stroke="#8e8e99" stroke-width="2" stroke-linecap="round" stroke-linejoin="round" stroke-width="1.9"><circle cx="12" cy="12" r="9"/><path d="M12 4.2v1.2M12 18.6v1.2M4.2 12h1.2M18.6 12h1.2"/><path d="M15.3 8.7l-1.9 4.7-4.7 1.9 1.9-4.7z" stroke-width="1.9"/></svg>
<svg style="position:absolute;left:32.8px;top:521.3px" width="48" height="48" viewBox="0 0 24 24"><path fill="#8e8e99" d="M18,13.18V10a6,6,0,0,0-5-5.91V3a1,1,0,0,0-2,0V4.09A6,6,0,0,0,6,10v3.18A3,3,0,0,0,4,16v2a1,1,0,0,0,1,1H8.14a4,4,0,0,0,7.72,0H19a1,1,0,0,0,1-1V16A3,3,0,0,0,18,13.18ZM8,10a4,4,0,0,1,8,0v3H8Zm4,10a2,2,0,0,1-1.72-1h3.44A2,2,0,0,1,12,20Zm6-3H6V16a1,1,0,0,1,1-1H17a1,1,0,0,1,1,1Z"/></svg>
<svg style="position:absolute;left:32.6px;top:1742.8px" width="48" height="48" viewBox="0 0 24 24"><path fill="#8e8e99" d="M21.32,9.55l-1.89-.63.89-1.78A1,1,0,0,0,20.13,6L18,3.87a1,1,0,0,0-1.15-.19l-1.78.89-.63-1.89A1,1,0,0,0,13.5,2h-3a1,1,0,0,0-.95.68L8.92,4.57,7.14,3.68A1,1,0,0,0,6,3.87L3.87,6a1,1,0,0,0-.19,1.15l.89,1.78-1.89.63A1,1,0,0,0,2,10.5v3a1,1,0,0,0,.68.95l1.89.63-.89,1.78A1,1,0,0,0,3.87,18L6,20.13a1,1,0,0,0,1.15.19l1.78-.89.63,1.89a1,1,0,0,0,.95.68h3a1,1,0,0,0,.95-.68l.63-1.89,1.78.89A1,1,0,0,0,18,20.130L20.13,18a1,1,0,0,0,.19-1.15l-.89-1.78,1.890-.63A1,1,0,0,0,22,13.5v-3A1,1,0,0,0,21.32,9.55ZM20,12.78l-1.2.4A2,2,0,0,0,17.64,16l.57,1.14-1.1,1.1L16,17.64a2,2,0,0,0-2.79,1.16l-.4,1.2H11.22l-.4-1.2A2,2,0,0,0,8,17.64l-1.14.57-1.1-1.1L6.36,16A2,2,0,0,0,5.2,13.18L4,12.78V11.22l1.2-.4A2,2,0,0,0,6.36,8L5.79,6.89l1.1-1.1L8,6.36A2,2,0,0,0,10.82,5.2l.4-1.2h1.56l.4,1.2A2,2,0,0,0,16,6.36l1.14-.57,1.1,1.1L17.64,8a2,2,0,0,0,1.16,2.79l1.2.4ZM12,8a4,4,0,1,0,4,4A4,4,0,0,0,12,8Zm0,6a2,2,0,1,1,2-2A2,2,0,0,1,12,14Z"/></svg>
<svg style="position:absolute;left:33px;top:1839px" width="48" height="48" viewBox="0 0 24 24"><path fill="#8e8e99" d="M19.63,3.65a1,1,0,0,0-.84-.2,8,8,0,0,1-6.22-1.27,1,1,0,0,0-1.14,0A8,8,0,0,1,5.21,3.45a1,1,0,0,0-.84.2A1,1,0,0,0,4,4.43v7.45a9,9,0,0,0,3.77,7.33l3.650,2.6a1,1,0,0,0,1.16,0l3.65-2.6A9,9,0,0,0,20,11.88V4.43A1,1,0,0,0,19.63,3.65ZM18,11.88a7,7,0,0,1-2.93,5.7L12,19.77,8.93,17.58A7,7,0,0,1,6,11.88V5.58a10,10,0,0,0,6-1.39,10,10,0,0,0,6,1.39Z"/></svg>
<div style="position:absolute;left:89.1px;top:87.1px;width:47.6px;height:47.6px;box-sizing:border-box;border-radius:50%;background:#212329;border:2px solid #2c2f36"></div>
<svg style="position:absolute;left:84px;top:82px" width="60" height="60" viewBox="0 0 60 60"><path d="M24.6 20l8.8 8.9-8.8 8.9" fill="none" stroke="#cfcfdc" stroke-width="3.8" stroke-linecap="round" stroke-linejoin="round"/></svg>
<div style="position:absolute;left:0;top:0;width:3696px;height:1px;background:#1a1917"></div>
</body></html>
